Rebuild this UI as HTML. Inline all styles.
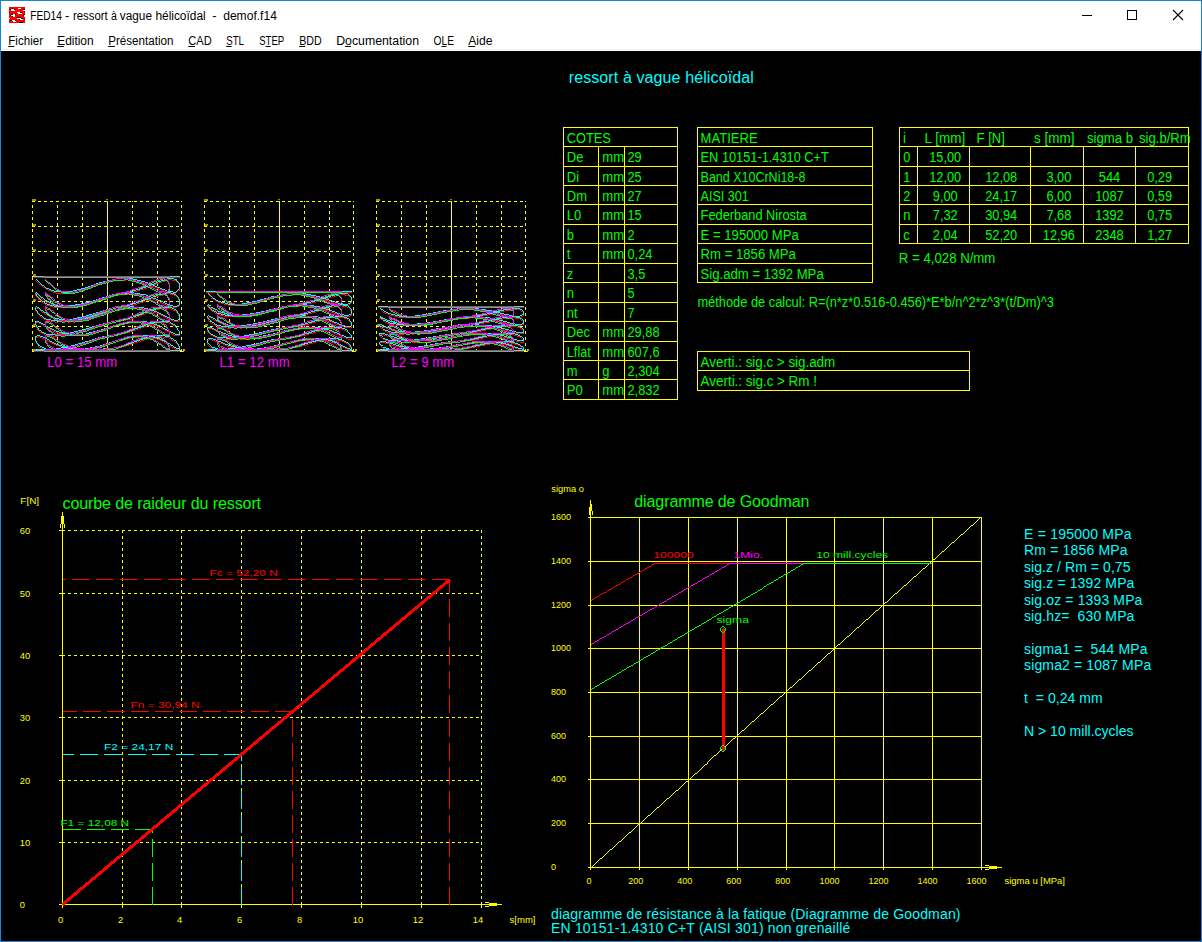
<!DOCTYPE html>
<html lang="fr"><head><meta charset="utf-8"><title>FED14 - ressort à vague hélicoïdal - demof.f14</title>
<style>html,body{margin:0;padding:0;background:#000;overflow:hidden}svg{display:block}text{white-space:pre}</style></head><body>
<svg width="1202" height="942" viewBox="0 0 1202 942" font-family="'Liberation Sans', 'DejaVu Sans', sans-serif">
<g id="frame">
<rect x="0" y="0" width="1202" height="942" fill="#1883d7"/>
<rect x="1" y="1" width="1200" height="50" fill="#ffffff"/>
<rect x="1" y="49" width="1200" height="1" fill="#f0f0f0"/>
<rect x="1" y="51" width="1200" height="890" fill="#000000"/>
<g id="appicon" shape-rendering="crispEdges">
<rect x="9" y="7" width="16" height="16" fill="#ff0000"/>
<rect x="12" y="8" width="1" height="1" fill="#000"/>
<rect x="18" y="8" width="3" height="1" fill="#fff"/>
<rect x="10" y="9" width="1" height="1" fill="#000"/>
<rect x="11" y="9" width="3" height="1" fill="#fff"/>
<rect x="14" y="9" width="1" height="1" fill="#000"/>
<rect x="23" y="9" width="2" height="1" fill="#000"/>
<rect x="11" y="10" width="4" height="1" fill="#fff"/>
<rect x="23" y="10" width="2" height="1" fill="#fff"/>
<rect x="24" y="11" width="1" height="1" fill="#000"/>
<rect x="9" y="12" width="1" height="1" fill="#000"/>
<rect x="17" y="12" width="3" height="1" fill="#fff"/>
<rect x="20" y="12" width="2" height="1" fill="#000"/>
<rect x="18" y="13" width="4" height="1" fill="#fff"/>
<rect x="11" y="14" width="2" height="1" fill="#000"/>
<rect x="13" y="14" width="2" height="1" fill="#fff"/>
<rect x="15" y="14" width="1" height="1" fill="#000"/>
<rect x="24" y="14" width="1" height="1" fill="#000"/>
<rect x="10" y="15" width="1" height="1" fill="#000"/>
<rect x="11" y="15" width="4" height="1" fill="#fff"/>
<rect x="23" y="15" width="1" height="1" fill="#000"/>
<rect x="24" y="15" width="1" height="1" fill="#fff"/>
<rect x="12" y="16" width="1" height="1" fill="#000"/>
<rect x="13" y="16" width="2" height="1" fill="#fff"/>
<rect x="24" y="16" width="1" height="1" fill="#fff"/>
<rect x="16" y="17" width="5" height="1" fill="#000"/>
<rect x="9" y="18" width="1" height="1" fill="#fff"/>
<rect x="17" y="18" width="4" height="1" fill="#fff"/>
<rect x="21" y="18" width="2" height="1" fill="#000"/>
<rect x="19" y="19" width="1" height="1" fill="#000"/>
<rect x="20" y="19" width="3" height="1" fill="#fff"/>
<rect x="10" y="20" width="2" height="1" fill="#000"/>
<rect x="12" y="20" width="3" height="1" fill="#fff"/>
<rect x="15" y="20" width="1" height="1" fill="#000"/>
<rect x="13" y="21" width="3" height="1" fill="#fff"/>
<rect x="19" y="22" width="4" height="1" fill="#000"/>
</g>
<g font-family="'Liberation Sans', 'DejaVu Sans', sans-serif" fill="#000000">
<text y="20" font-size="12" fill="#000"><tspan x="30.2" textLength="31.7" lengthAdjust="spacingAndGlyphs">FED14</tspan> <tspan x="65.0" textLength="4.3" lengthAdjust="spacingAndGlyphs">-</tspan> <tspan x="73.0" textLength="34.8" lengthAdjust="spacingAndGlyphs">ressort</tspan> <tspan x="111.1" textLength="5.9" lengthAdjust="spacingAndGlyphs">à</tspan> <tspan x="119.8" textLength="32.2" lengthAdjust="spacingAndGlyphs">vague</tspan> <tspan x="155.4" textLength="50.3" lengthAdjust="spacingAndGlyphs">hélicoïdal</tspan> <tspan x="212.2" textLength="4.3" lengthAdjust="spacingAndGlyphs">-</tspan> <tspan x="223.2" textLength="53.7" lengthAdjust="spacingAndGlyphs">demof.f14</tspan></text>
<text x="8.3" y="45" font-size="12" textLength="34.7" lengthAdjust="spacingAndGlyphs">Fichier</text>
<rect x="8.3" y="46" width="6.0" height="1" fill="#000"/>
<text x="57.2" y="45" font-size="12" textLength="36.4" lengthAdjust="spacingAndGlyphs">Edition</text>
<rect x="57.2" y="46" width="6.7" height="1" fill="#000"/>
<text x="108.2" y="45" font-size="12" textLength="65.3" lengthAdjust="spacingAndGlyphs">Présentation</text>
<rect x="108.2" y="46" width="6.6" height="1" fill="#000"/>
<text x="188.2" y="45" font-size="12" textLength="23.5" lengthAdjust="spacingAndGlyphs">CAD</text>
<rect x="188.2" y="46" width="6.8" height="1" fill="#000"/>
<text x="226.2" y="45" font-size="12" textLength="17.8" lengthAdjust="spacingAndGlyphs">STL</text>
<rect x="226.2" y="46" width="5.5" height="1" fill="#000"/>
<text x="259.2" y="45" font-size="12" textLength="25.0" lengthAdjust="spacingAndGlyphs">STEP</text>
<rect x="265.6" y="46" width="5.0" height="1" fill="#000"/>
<text x="299.2" y="45" font-size="12" textLength="22.5" lengthAdjust="spacingAndGlyphs">BDD</text>
<rect x="299.2" y="46" width="6.0" height="1" fill="#000"/>
<text x="336.2" y="45" font-size="12" textLength="82.8" lengthAdjust="spacingAndGlyphs">Documentation</text>
<rect x="345.1" y="46" width="5.8" height="1" fill="#000"/>
<text x="433.5" y="45" font-size="12" textLength="20.5" lengthAdjust="spacingAndGlyphs">OLE</text>
<rect x="441.5" y="46" width="4.8" height="1" fill="#000"/>
<text x="468.2" y="45" font-size="12" textLength="24.3" lengthAdjust="spacingAndGlyphs">Aide</text>
<rect x="468.2" y="46" width="6.9" height="1" fill="#000"/>
</g>
<g stroke="#000" stroke-width="1" fill="none" shape-rendering="crispEdges">
<line x1="1082" y1="15.5" x2="1092" y2="15.5"/>
<rect x="1127.5" y="10.5" width="9" height="9"/>
</g>
<g stroke="#000" stroke-width="1.1" fill="none">
<path d="M1173 10 L1183 20 M1183 10 L1173 20"/>
</g>
</g>
<text x="568.7" y="82.8" font-size="16" fill="#00ffff" letter-spacing="0.11">ressort à vague hélicoïdal</text>
<g class="spring" shape-rendering="crispEdges" fill="none" stroke-width="1">
<line x1="32" y1="201.5" x2="182" y2="201.5" stroke="#ffff00" stroke-width="1" stroke-dasharray="3 3" stroke-dashoffset="0"/>
<line x1="32" y1="226.5" x2="182" y2="226.5" stroke="#ffff00" stroke-width="1" stroke-dasharray="3 3" stroke-dashoffset="0"/>
<line x1="32" y1="251.5" x2="182" y2="251.5" stroke="#ffff00" stroke-width="1" stroke-dasharray="3 3" stroke-dashoffset="0"/>
<line x1="32" y1="276.5" x2="182" y2="276.5" stroke="#ffff00" stroke-width="1" stroke-dasharray="3 3" stroke-dashoffset="0"/>
<line x1="32" y1="301.5" x2="182" y2="301.5" stroke="#ffff00" stroke-width="1" stroke-dasharray="3 3" stroke-dashoffset="0"/>
<line x1="32" y1="326.5" x2="182" y2="326.5" stroke="#ffff00" stroke-width="1" stroke-dasharray="3 3" stroke-dashoffset="0"/>
<line x1="32" y1="351.5" x2="182" y2="351.5" stroke="#ffff00" stroke-width="1" stroke-dasharray="3 3" stroke-dashoffset="0"/>
<line x1="32.5" y1="352" x2="32.5" y2="201" stroke="#ffff00" stroke-width="1" stroke-dasharray="3 3" stroke-dashoffset="0"/>
<line x1="57.5" y1="352" x2="57.5" y2="201" stroke="#ffff00" stroke-width="1" stroke-dasharray="3 3" stroke-dashoffset="0"/>
<line x1="82.5" y1="352" x2="82.5" y2="201" stroke="#ffff00" stroke-width="1" stroke-dasharray="3 3" stroke-dashoffset="0"/>
<line x1="132.5" y1="352" x2="132.5" y2="201" stroke="#ffff00" stroke-width="1" stroke-dasharray="3 3" stroke-dashoffset="0"/>
<line x1="157.5" y1="352" x2="157.5" y2="201" stroke="#ffff00" stroke-width="1" stroke-dasharray="3 3" stroke-dashoffset="0"/>
<line x1="181.5" y1="352" x2="181.5" y2="201" stroke="#ffff00" stroke-width="1" stroke-dasharray="3 3" stroke-dashoffset="0"/>
<line x1="107.5" y1="201" x2="107.5" y2="352" stroke="#ffff00" stroke-width="1"/>
<rect x="32" y="199" width="1" height="2" fill="#55b800"/>
<rect x="33" y="199" width="1" height="2" fill="#c87800"/>
<rect x="34" y="199" width="1" height="2" fill="#6ab000"/>
<rect x="35" y="199" width="1" height="2" fill="#e08c00"/>
<rect x="33" y="224" width="1" height="2" fill="#c87800"/>
<rect x="34" y="224" width="1" height="2" fill="#55b800"/>
<rect x="35" y="224" width="1" height="2" fill="#d08000"/>
<rect x="33" y="249" width="1" height="2" fill="#c87800"/>
<rect x="34" y="249" width="1" height="2" fill="#55b800"/>
<rect x="35" y="249" width="1" height="2" fill="#d08000"/>
<rect x="33" y="274" width="1" height="2" fill="#c87800"/>
<rect x="34" y="274" width="1" height="2" fill="#55b800"/>
<rect x="35" y="274" width="1" height="2" fill="#d08000"/>
<rect x="33" y="299" width="1" height="2" fill="#c87800"/>
<rect x="34" y="299" width="1" height="2" fill="#55b800"/>
<rect x="35" y="299" width="1" height="2" fill="#d08000"/>
<rect x="33" y="324" width="1" height="2" fill="#c87800"/>
<rect x="34" y="324" width="1" height="2" fill="#55b800"/>
<rect x="35" y="324" width="1" height="2" fill="#d08000"/>
<rect x="33" y="349" width="1" height="2" fill="#c87800"/>
<rect x="34" y="349" width="1" height="2" fill="#55b800"/>
<rect x="35" y="349" width="1" height="2" fill="#d08000"/>
<rect x="106" y="199" width="2" height="1" fill="#8f8f00"/>
<rect x="180" y="350" width="1" height="2" fill="#ffff00"/>
<rect x="182" y="351" width="1" height="1" fill="#ffff00"/>
<rect x="183" y="349" width="1" height="3" fill="#b4d400"/>
<rect x="184" y="349" width="1" height="2" fill="#e89400"/>
<polyline points="35.5,280.0 39.1,283.8 46.1,289.2 56.2,293.1 68.9,293.3 83.6,289.6 99.4,284.2 115.6,280.2 131.4,279.9 146.1,283.4 158.8,288.8 168.9,292.9 175.9,293.4 179.5,290.0 179.5,284.7 175.9,280.4 168.9,279.7 158.8,283.0 146.1,288.3 131.4,292.7 115.6,295.3 99.4,300.5 83.6,304.7 68.9,307.3 56.2,307.8 46.1,305.0 39.1,299.7 35.5,295.0 35.5,293.8 39.1,296.6 46.1,301.9 56.2,306.5 68.9,307.9 83.6,305.2 99.4,300.0 115.6,295.3 131.4,293.8 146.1,296.3 158.8,301.4 168.9,306.2 175.9,307.9 179.5,305.6 179.5,300.5 175.9,295.6 168.9,293.7 158.8,295.9 146.1,301.0 131.4,305.9 115.6,308.0 99.4,313.3 83.6,317.9 68.9,321.0 56.2,322.2 46.1,320.4 39.1,315.5 35.5,310.3 35.5,308.0 39.1,309.7 46.1,314.5 56.2,319.6 68.9,322.1 83.6,320.6 99.4,315.8 115.6,310.7 131.4,308.0 146.1,309.4 158.8,314.0 168.9,319.3 175.9,322.1 179.5,320.8 179.5,316.3 175.9,311.0 168.9,308.1 158.8,309.1 146.1,313.6 131.4,318.9 115.6,322.0 99.4,326.0 83.6,330.9 68.9,334.5 56.2,336.2 46.1,335.5 39.1,331.3 35.5,325.9 35.5,322.5 39.1,323.0 46.1,327.1 56.2,332.5 68.9,336.0 83.6,335.7 99.4,331.6 115.6,326.2 131.4,322.6 146.1,322.8 158.8,326.7 168.9,332.1 175.9,335.9 179.5,335.8 179.5,332.1 175.9,326.7 168.9,322.8 158.8,322.6 146.1,326.3 131.4,331.7 115.6,335.7 99.4,338.7 83.6,343.8 68.9,347.8 56.2,350.2 46.1,350.3 39.1,347.0 35.5,341.6 35.5,337.3 39.1,336.6 46.1,339.9 56.2,345.2 68.9,349.6 83.6,350.4 99.4,347.3 115.6,342.0 131.4,337.5 146.1,336.5 158.8,339.5 168.9,344.8 175.9,349.3 179.5,350.5 179.5,347.7 175.9,342.4 168.9,337.8 158.8,336.4 146.1,339.1 131.4,344.3 115.6,349.0 99.4,350.6 83.6,350.6 68.9,350.6 56.2,350.6 46.1,350.6 39.1,350.6 35.5,350.6" stroke="#ff0000" stroke-width="0.8"/>
<polyline points="35.5,280.0 39.1,283.8 46.1,289.2 56.2,293.1 68.9,293.3 83.6,289.6 99.4,284.2 115.6,280.2 131.4,279.9 146.1,283.4 158.8,288.8 168.9,292.9 175.9,293.4 179.5,290.0 179.5,284.7 175.9,280.4 168.9,279.7 158.8,283.0 146.1,288.3 131.4,292.7 115.6,295.3 99.4,300.5 83.6,304.7 68.9,307.3 56.2,307.8 46.1,305.0 39.1,299.7 35.5,295.0 35.5,293.8 39.1,296.6 46.1,301.9 56.2,306.5 68.9,307.9 83.6,305.2 99.4,300.0 115.6,295.3 131.4,293.8 146.1,296.3 158.8,301.4 168.9,306.2 175.9,307.9 179.5,305.6 179.5,300.5 175.9,295.6 168.9,293.7 158.8,295.9 146.1,301.0 131.4,305.9 115.6,308.0 99.4,313.3 83.6,317.9 68.9,321.0 56.2,322.2 46.1,320.4 39.1,315.5 35.5,310.3 35.5,308.0 39.1,309.7 46.1,314.5 56.2,319.6 68.9,322.1 83.6,320.6 99.4,315.8 115.6,310.7 131.4,308.0 146.1,309.4 158.8,314.0 168.9,319.3 175.9,322.1 179.5,320.8 179.5,316.3 175.9,311.0 168.9,308.1 158.8,309.1 146.1,313.6 131.4,318.9 115.6,322.0 99.4,326.0 83.6,330.9 68.9,334.5 56.2,336.2 46.1,335.5 39.1,331.3 35.5,325.9 35.5,322.5 39.1,323.0 46.1,327.1 56.2,332.5 68.9,336.0 83.6,335.7 99.4,331.6 115.6,326.2 131.4,322.6 146.1,322.8 158.8,326.7 168.9,332.1 175.9,335.9 179.5,335.8 179.5,332.1 175.9,326.7 168.9,322.8 158.8,322.6 146.1,326.3 131.4,331.7 115.6,335.7 99.4,338.7 83.6,343.8 68.9,347.8 56.2,350.2 46.1,350.3 39.1,347.0 35.5,341.6 35.5,337.3 39.1,336.6 46.1,339.9 56.2,345.2 68.9,349.6 83.6,350.4 99.4,347.3 115.6,342.0 131.4,337.5 146.1,336.5 158.8,339.5 168.9,344.8 175.9,349.3 179.5,350.5 179.5,347.7 175.9,342.4 168.9,337.8 158.8,336.4 146.1,339.1 131.4,344.3 115.6,349.0 99.4,350.6 83.6,350.6 68.9,350.6 56.2,350.6 46.1,350.6 39.1,350.6 35.5,350.6" stroke="#ff0000" stroke-width="0.8"/>
<polyline points="35.5,280.0 39.1,283.8 46.1,289.2 56.2,293.1 68.9,293.3 83.6,289.6 99.4,284.2 115.6,280.2 131.4,279.9 146.1,283.4 158.8,288.8 168.9,292.9 175.9,293.4 179.5,290.0 179.5,284.7 175.9,280.4 168.9,279.7 158.8,283.0 146.1,288.3 131.4,292.7 115.6,295.3 99.4,300.5 83.6,304.7 68.9,307.3 56.2,307.8 46.1,305.0 39.1,299.7 35.5,295.0 35.5,293.8 39.1,296.6 46.1,301.9 56.2,306.5 68.9,307.9 83.6,305.2 99.4,300.0 115.6,295.3 131.4,293.8 146.1,296.3 158.8,301.4 168.9,306.2 175.9,307.9 179.5,305.6 179.5,300.5 175.9,295.6 168.9,293.7 158.8,295.9 146.1,301.0 131.4,305.9 115.6,308.0 99.4,313.3 83.6,317.9 68.9,321.0 56.2,322.2 46.1,320.4 39.1,315.5 35.5,310.3 35.5,308.0 39.1,309.7 46.1,314.5 56.2,319.6 68.9,322.1 83.6,320.6 99.4,315.8 115.6,310.7 131.4,308.0 146.1,309.4 158.8,314.0 168.9,319.3 175.9,322.1 179.5,320.8 179.5,316.3 175.9,311.0 168.9,308.1 158.8,309.1 146.1,313.6 131.4,318.9 115.6,322.0 99.4,326.0 83.6,330.9 68.9,334.5 56.2,336.2 46.1,335.5 39.1,331.3 35.5,325.9 35.5,322.5 39.1,323.0 46.1,327.1 56.2,332.5 68.9,336.0 83.6,335.7 99.4,331.6 115.6,326.2 131.4,322.6 146.1,322.8 158.8,326.7 168.9,332.1 175.9,335.9 179.5,335.8 179.5,332.1 175.9,326.7 168.9,322.8 158.8,322.6 146.1,326.3 131.4,331.7 115.6,335.7 99.4,338.7 83.6,343.8 68.9,347.8 56.2,350.2 46.1,350.3 39.1,347.0 35.5,341.6 35.5,337.3 39.1,336.6 46.1,339.9 56.2,345.2 68.9,349.6 83.6,350.4 99.4,347.3 115.6,342.0 131.4,337.5 146.1,336.5 158.8,339.5 168.9,344.8 175.9,349.3 179.5,350.5 179.5,347.7 175.9,342.4 168.9,337.8 158.8,336.4 146.1,339.1 131.4,344.3 115.6,349.0 99.4,350.6 83.6,350.6 68.9,350.6 56.2,350.6 46.1,350.6 39.1,350.6 35.5,350.6" stroke="#ff0000" stroke-width="0.8"/>
<polyline points="45.4,280.0 48.5,283.8 54.6,289.2 63.3,293.1 74.2,293.3 86.9,289.6 100.5,284.2 114.5,280.2 128.1,279.9 140.8,283.4 151.7,288.8 160.4,292.9 166.5,293.4 169.6,290.0 169.6,284.7 166.5,280.4 160.4,279.7 151.7,283.0 140.8,288.3 128.1,292.7 114.5,295.3 100.5,300.5 86.9,304.7 74.2,307.3 63.3,307.8 54.6,305.0 48.5,299.7 45.4,295.0 45.4,293.8 48.5,296.6 54.6,301.9 63.3,306.5 74.2,307.9 86.9,305.2 100.5,300.0 114.5,295.3 128.1,293.8 140.8,296.3 151.7,301.4 160.4,306.2 166.5,307.9 169.6,305.6 169.6,300.5 166.5,295.6 160.4,293.7 151.7,295.9 140.8,301.0 128.1,305.9 114.5,308.0 100.5,313.3 86.9,317.9 74.2,321.0 63.3,322.2 54.6,320.4 48.5,315.5 45.4,310.3 45.4,308.0 48.5,309.7 54.6,314.5 63.3,319.6 74.2,322.1 86.9,320.6 100.5,315.8 114.5,310.7 128.1,308.0 140.8,309.4 151.7,314.0 160.4,319.3 166.5,322.1 169.6,320.8 169.6,316.3 166.5,311.0 160.4,308.1 151.7,309.1 140.8,313.6 128.1,318.9 114.5,322.0 100.5,326.0 86.9,330.9 74.2,334.5 63.3,336.2 54.6,335.5 48.5,331.3 45.4,325.9 45.4,322.5 48.5,323.0 54.6,327.1 63.3,332.5 74.2,336.0 86.9,335.7 100.5,331.6 114.5,326.2 128.1,322.6 140.8,322.8 151.7,326.7 160.4,332.1 166.5,335.9 169.6,335.8 169.6,332.1 166.5,326.7 160.4,322.8 151.7,322.6 140.8,326.3 128.1,331.7 114.5,335.7 100.5,338.7 86.9,343.8 74.2,347.8 63.3,350.2 54.6,350.3 48.5,347.0 45.4,341.6 45.4,337.3 48.5,336.6 54.6,339.9 63.3,345.2 74.2,349.6 86.9,350.4 100.5,347.3 114.5,342.0 128.1,337.5 140.8,336.5 151.7,339.5 160.4,344.8 166.5,349.3 169.6,350.5 169.6,347.7 166.5,342.4 160.4,337.8 151.7,336.4 140.8,339.1 128.1,344.3 114.5,349.0 100.5,350.6 86.9,350.6 74.2,350.6 63.3,350.6 54.6,350.6 48.5,350.6 45.4,350.6" stroke="#00ff00" stroke-width="0.8"/>
<polyline points="45.4,280.0 48.5,283.8 54.6,289.2 63.3,293.1 74.2,293.3 86.9,289.6 100.5,284.2 114.5,280.2 128.1,279.9 140.8,283.4 151.7,288.8 160.4,292.9 166.5,293.4 169.6,290.0 169.6,284.7 166.5,280.4 160.4,279.7 151.7,283.0 140.8,288.3 128.1,292.7 114.5,295.3 100.5,300.5 86.9,304.7 74.2,307.3 63.3,307.8 54.6,305.0 48.5,299.7 45.4,295.0 45.4,293.8 48.5,296.6 54.6,301.9 63.3,306.5 74.2,307.9 86.9,305.2 100.5,300.0 114.5,295.3 128.1,293.8 140.8,296.3 151.7,301.4 160.4,306.2 166.5,307.9 169.6,305.6 169.6,300.5 166.5,295.6 160.4,293.7 151.7,295.9 140.8,301.0 128.1,305.9 114.5,308.0 100.5,313.3 86.9,317.9 74.2,321.0 63.3,322.2 54.6,320.4 48.5,315.5 45.4,310.3 45.4,308.0 48.5,309.7 54.6,314.5 63.3,319.6 74.2,322.1 86.9,320.6 100.5,315.8 114.5,310.7 128.1,308.0 140.8,309.4 151.7,314.0 160.4,319.3 166.5,322.1 169.6,320.8 169.6,316.3 166.5,311.0 160.4,308.1 151.7,309.1 140.8,313.6 128.1,318.9 114.5,322.0 100.5,326.0 86.9,330.9 74.2,334.5 63.3,336.2 54.6,335.5 48.5,331.3 45.4,325.9 45.4,322.5 48.5,323.0 54.6,327.1 63.3,332.5 74.2,336.0 86.9,335.7 100.5,331.6 114.5,326.2 128.1,322.6 140.8,322.8 151.7,326.7 160.4,332.1 166.5,335.9 169.6,335.8 169.6,332.1 166.5,326.7 160.4,322.8 151.7,322.6 140.8,326.3 128.1,331.7 114.5,335.7 100.5,338.7 86.9,343.8 74.2,347.8 63.3,350.2 54.6,350.3 48.5,347.0 45.4,341.6 45.4,337.3 48.5,336.6 54.6,339.9 63.3,345.2 74.2,349.6 86.9,350.4 100.5,347.3 114.5,342.0 128.1,337.5 140.8,336.5 151.7,339.5 160.4,344.8 166.5,349.3 169.6,350.5 169.6,347.7 166.5,342.4 160.4,337.8 151.7,336.4 140.8,339.1 128.1,344.3 114.5,349.0 100.5,350.6 86.9,350.6 74.2,350.6 63.3,350.6 54.6,350.6 48.5,350.6 45.4,350.6" stroke="#00ff00" stroke-width="0.8"/>
<polyline points="45.4,280.0 48.5,283.8 54.6,289.2 63.3,293.1 74.2,293.3 86.9,289.6 100.5,284.2 114.5,280.2 128.1,279.9 140.8,283.4 151.7,288.8 160.4,292.9 166.5,293.4 169.6,290.0 169.6,284.7 166.5,280.4 160.4,279.7 151.7,283.0 140.8,288.3 128.1,292.7 114.5,295.3 100.5,300.5 86.9,304.7 74.2,307.3 63.3,307.8 54.6,305.0 48.5,299.7 45.4,295.0 45.4,293.8 48.5,296.6 54.6,301.9 63.3,306.5 74.2,307.9 86.9,305.2 100.5,300.0 114.5,295.3 128.1,293.8 140.8,296.3 151.7,301.4 160.4,306.2 166.5,307.9 169.6,305.6 169.6,300.5 166.5,295.6 160.4,293.7 151.7,295.9 140.8,301.0 128.1,305.9 114.5,308.0 100.5,313.3 86.9,317.9 74.2,321.0 63.3,322.2 54.6,320.4 48.5,315.5 45.4,310.3 45.4,308.0 48.5,309.7 54.6,314.5 63.3,319.6 74.2,322.1 86.9,320.6 100.5,315.8 114.5,310.7 128.1,308.0 140.8,309.4 151.7,314.0 160.4,319.3 166.5,322.1 169.6,320.8 169.6,316.3 166.5,311.0 160.4,308.1 151.7,309.1 140.8,313.6 128.1,318.9 114.5,322.0 100.5,326.0 86.9,330.9 74.2,334.5 63.3,336.2 54.6,335.5 48.5,331.3 45.4,325.9 45.4,322.5 48.5,323.0 54.6,327.1 63.3,332.5 74.2,336.0 86.9,335.7 100.5,331.6 114.5,326.2 128.1,322.6 140.8,322.8 151.7,326.7 160.4,332.1 166.5,335.9 169.6,335.8 169.6,332.1 166.5,326.7 160.4,322.8 151.7,322.6 140.8,326.3 128.1,331.7 114.5,335.7 100.5,338.7 86.9,343.8 74.2,347.8 63.3,350.2 54.6,350.3 48.5,347.0 45.4,341.6 45.4,337.3 48.5,336.6 54.6,339.9 63.3,345.2 74.2,349.6 86.9,350.4 100.5,347.3 114.5,342.0 128.1,337.5 140.8,336.5 151.7,339.5 160.4,344.8 166.5,349.3 169.6,350.5 169.6,347.7 166.5,342.4 160.4,337.8 151.7,336.4 140.8,339.1 128.1,344.3 114.5,349.0 100.5,350.6 86.9,350.6 74.2,350.6 63.3,350.6 54.6,350.6 48.5,350.6 45.4,350.6" stroke="#00ff00" stroke-width="0.8"/>
<polyline points="35.5,278.8 39.1,282.6 46.1,288.0 56.2,291.9 68.9,292.1 83.6,288.4 99.4,283.0 115.6,279.0 131.4,278.7 146.1,282.2 158.8,287.6 168.9,291.7 175.9,292.2 179.5,288.8 179.5,283.5 175.9,279.2 168.9,278.5 158.8,281.8 146.1,287.1 131.4,291.5 115.6,294.1 99.4,299.3 83.6,303.5 68.9,306.1 56.2,306.6 46.1,303.8 39.1,298.5 35.5,293.8 35.5,292.6 39.1,295.4 46.1,300.7 56.2,305.3 68.9,306.7 83.6,304.0 99.4,298.8 115.6,294.1 131.4,292.6 146.1,295.1 158.8,300.2 168.9,305.0 175.9,306.7 179.5,304.4 179.5,299.3 175.9,294.4 168.9,292.5 158.8,294.7 146.1,299.8 131.4,304.7 115.6,306.8 99.4,312.1 83.6,316.7 68.9,319.8 56.2,321.0 46.1,319.2 39.1,314.3 35.5,309.1 35.5,306.8 39.1,308.5 46.1,313.3 56.2,318.4 68.9,320.9 83.6,319.4 99.4,314.6 115.6,309.5 131.4,306.8 146.1,308.2 158.8,312.8 168.9,318.1 175.9,320.9 179.5,319.6 179.5,315.1 175.9,309.8 168.9,306.9 158.8,307.9 146.1,312.4 131.4,317.7 115.6,320.8 99.4,324.8 83.6,329.7 68.9,333.3 56.2,335.0 46.1,334.3 39.1,330.1 35.5,324.7 35.5,321.3 39.1,321.8 46.1,325.9 56.2,331.3 68.9,334.8 83.6,334.5 99.4,330.4 115.6,325.0 131.4,321.4 146.1,321.6 158.8,325.5 168.9,330.9 175.9,334.7 179.5,334.6 179.5,330.9 175.9,325.5 168.9,321.6 158.8,321.4 146.1,325.1 131.4,330.5 115.6,334.5 99.4,337.5 83.6,342.6 68.9,346.6 56.2,349.0 46.1,349.1 39.1,345.8 35.5,340.4 35.5,336.1 39.1,335.4 46.1,338.7 56.2,344.0 68.9,348.4 83.6,349.2 99.4,346.1 115.6,340.8 131.4,336.3 146.1,335.3 158.8,338.3 168.9,343.6 175.9,348.1 179.5,349.3 179.5,346.5 175.9,341.2 168.9,336.6 158.8,335.2 146.1,337.9 131.4,343.1 115.6,347.8 99.4,349.4 83.6,349.4 68.9,349.4 56.2,349.4 46.1,349.4 39.1,349.4 35.5,349.4" stroke="#00ffff" stroke-width="0.8"/>
<polyline points="35.5,278.8 39.1,282.6 46.1,288.0 56.2,291.9 68.9,292.1 83.6,288.4 99.4,283.0 115.6,279.0 131.4,278.7 146.1,282.2 158.8,287.6 168.9,291.7 175.9,292.2 179.5,288.8 179.5,283.5 175.9,279.2 168.9,278.5 158.8,281.8 146.1,287.1 131.4,291.5 115.6,294.1 99.4,299.3 83.6,303.5 68.9,306.1 56.2,306.6 46.1,303.8 39.1,298.5 35.5,293.8 35.5,292.6 39.1,295.4 46.1,300.7 56.2,305.3 68.9,306.7 83.6,304.0 99.4,298.8 115.6,294.1 131.4,292.6 146.1,295.1 158.8,300.2 168.9,305.0 175.9,306.7 179.5,304.4 179.5,299.3 175.9,294.4 168.9,292.5 158.8,294.7 146.1,299.8 131.4,304.7 115.6,306.8 99.4,312.1 83.6,316.7 68.9,319.8 56.2,321.0 46.1,319.2 39.1,314.3 35.5,309.1 35.5,306.8 39.1,308.5 46.1,313.3 56.2,318.4 68.9,320.9 83.6,319.4 99.4,314.6 115.6,309.5 131.4,306.8 146.1,308.2 158.8,312.8 168.9,318.1 175.9,320.9 179.5,319.6 179.5,315.1 175.9,309.8 168.9,306.9 158.8,307.9 146.1,312.4 131.4,317.7 115.6,320.8 99.4,324.8 83.6,329.7 68.9,333.3 56.2,335.0 46.1,334.3 39.1,330.1 35.5,324.7 35.5,321.3 39.1,321.8 46.1,325.9 56.2,331.3 68.9,334.8 83.6,334.5 99.4,330.4 115.6,325.0 131.4,321.4 146.1,321.6 158.8,325.5 168.9,330.9 175.9,334.7 179.5,334.6 179.5,330.9 175.9,325.5 168.9,321.6 158.8,321.4 146.1,325.1 131.4,330.5 115.6,334.5 99.4,337.5 83.6,342.6 68.9,346.6 56.2,349.0 46.1,349.1 39.1,345.8 35.5,340.4 35.5,336.1 39.1,335.4 46.1,338.7 56.2,344.0 68.9,348.4 83.6,349.2 99.4,346.1 115.6,340.8 131.4,336.3 146.1,335.3 158.8,338.3 168.9,343.6 175.9,348.1 179.5,349.3 179.5,346.5 175.9,341.2 168.9,336.6 158.8,335.2 146.1,337.9 131.4,343.1 115.6,347.8 99.4,349.4 83.6,349.4 68.9,349.4 56.2,349.4 46.1,349.4 39.1,349.4 35.5,349.4" stroke="#00ffff" stroke-width="0.8"/>
<polyline points="35.5,278.8 39.1,282.6 46.1,288.0 56.2,291.9 68.9,292.1 83.6,288.4 99.4,283.0 115.6,279.0 131.4,278.7 146.1,282.2 158.8,287.6 168.9,291.7 175.9,292.2 179.5,288.8 179.5,283.5 175.9,279.2 168.9,278.5 158.8,281.8 146.1,287.1 131.4,291.5 115.6,294.1 99.4,299.3 83.6,303.5 68.9,306.1 56.2,306.6 46.1,303.8 39.1,298.5 35.5,293.8 35.5,292.6 39.1,295.4 46.1,300.7 56.2,305.3 68.9,306.7 83.6,304.0 99.4,298.8 115.6,294.1 131.4,292.6 146.1,295.1 158.8,300.2 168.9,305.0 175.9,306.7 179.5,304.4 179.5,299.3 175.9,294.4 168.9,292.5 158.8,294.7 146.1,299.8 131.4,304.7 115.6,306.8 99.4,312.1 83.6,316.7 68.9,319.8 56.2,321.0 46.1,319.2 39.1,314.3 35.5,309.1 35.5,306.8 39.1,308.5 46.1,313.3 56.2,318.4 68.9,320.9 83.6,319.4 99.4,314.6 115.6,309.5 131.4,306.8 146.1,308.2 158.8,312.8 168.9,318.1 175.9,320.9 179.5,319.6 179.5,315.1 175.9,309.8 168.9,306.9 158.8,307.9 146.1,312.4 131.4,317.7 115.6,320.8 99.4,324.8 83.6,329.7 68.9,333.3 56.2,335.0 46.1,334.3 39.1,330.1 35.5,324.7 35.5,321.3 39.1,321.8 46.1,325.9 56.2,331.3 68.9,334.8 83.6,334.5 99.4,330.4 115.6,325.0 131.4,321.4 146.1,321.6 158.8,325.5 168.9,330.9 175.9,334.7 179.5,334.6 179.5,330.9 175.9,325.5 168.9,321.6 158.8,321.4 146.1,325.1 131.4,330.5 115.6,334.5 99.4,337.5 83.6,342.6 68.9,346.6 56.2,349.0 46.1,349.1 39.1,345.8 35.5,340.4 35.5,336.1 39.1,335.4 46.1,338.7 56.2,344.0 68.9,348.4 83.6,349.2 99.4,346.1 115.6,340.8 131.4,336.3 146.1,335.3 158.8,338.3 168.9,343.6 175.9,348.1 179.5,349.3 179.5,346.5 175.9,341.2 168.9,336.6 158.8,335.2 146.1,337.9 131.4,343.1 115.6,347.8 99.4,349.4 83.6,349.4 68.9,349.4 56.2,349.4 46.1,349.4 39.1,349.4 35.5,349.4" stroke="#00ffff" stroke-width="0.8"/>
<polyline points="45.4,278.8 48.5,282.6 54.6,288.0 63.3,291.9 74.2,292.1 86.9,288.4 100.5,283.0 114.5,279.0 128.1,278.7 140.8,282.2 151.7,287.6 160.4,291.7 166.5,292.2 169.6,288.8 169.6,283.5 166.5,279.2 160.4,278.5 151.7,281.8 140.8,287.1 128.1,291.5 114.5,294.1 100.5,299.3 86.9,303.5 74.2,306.1 63.3,306.6 54.6,303.8 48.5,298.5 45.4,293.8 45.4,292.6 48.5,295.4 54.6,300.7 63.3,305.3 74.2,306.7 86.9,304.0 100.5,298.8 114.5,294.1 128.1,292.6 140.8,295.1 151.7,300.2 160.4,305.0 166.5,306.7 169.6,304.4 169.6,299.3 166.5,294.4 160.4,292.5 151.7,294.7 140.8,299.8 128.1,304.7 114.5,306.8 100.5,312.1 86.9,316.7 74.2,319.8 63.3,321.0 54.6,319.2 48.5,314.3 45.4,309.1 45.4,306.8 48.5,308.5 54.6,313.3 63.3,318.4 74.2,320.9 86.9,319.4 100.5,314.6 114.5,309.5 128.1,306.8 140.8,308.2 151.7,312.8 160.4,318.1 166.5,320.9 169.6,319.6 169.6,315.1 166.5,309.8 160.4,306.9 151.7,307.9 140.8,312.4 128.1,317.7 114.5,320.8 100.5,324.8 86.9,329.7 74.2,333.3 63.3,335.0 54.6,334.3 48.5,330.1 45.4,324.7 45.4,321.3 48.5,321.8 54.6,325.9 63.3,331.3 74.2,334.8 86.9,334.5 100.5,330.4 114.5,325.0 128.1,321.4 140.8,321.6 151.7,325.5 160.4,330.9 166.5,334.7 169.6,334.6 169.6,330.9 166.5,325.5 160.4,321.6 151.7,321.4 140.8,325.1 128.1,330.5 114.5,334.5 100.5,337.5 86.9,342.6 74.2,346.6 63.3,349.0 54.6,349.1 48.5,345.8 45.4,340.4 45.4,336.1 48.5,335.4 54.6,338.7 63.3,344.0 74.2,348.4 86.9,349.2 100.5,346.1 114.5,340.8 128.1,336.3 140.8,335.3 151.7,338.3 160.4,343.6 166.5,348.1 169.6,349.3 169.6,346.5 166.5,341.2 160.4,336.6 151.7,335.2 140.8,337.9 128.1,343.1 114.5,347.8 100.5,349.4 86.9,349.4 74.2,349.4 63.3,349.4 54.6,349.4 48.5,349.4 45.4,349.4" stroke="#ff00ff" stroke-width="0.8"/>
<polyline points="45.4,278.8 48.5,282.6 54.6,288.0 63.3,291.9 74.2,292.1 86.9,288.4 100.5,283.0 114.5,279.0 128.1,278.7 140.8,282.2 151.7,287.6 160.4,291.7 166.5,292.2 169.6,288.8 169.6,283.5 166.5,279.2 160.4,278.5 151.7,281.8 140.8,287.1 128.1,291.5 114.5,294.1 100.5,299.3 86.9,303.5 74.2,306.1 63.3,306.6 54.6,303.8 48.5,298.5 45.4,293.8 45.4,292.6 48.5,295.4 54.6,300.7 63.3,305.3 74.2,306.7 86.9,304.0 100.5,298.8 114.5,294.1 128.1,292.6 140.8,295.1 151.7,300.2 160.4,305.0 166.5,306.7 169.6,304.4 169.6,299.3 166.5,294.4 160.4,292.5 151.7,294.7 140.8,299.8 128.1,304.7 114.5,306.8 100.5,312.1 86.9,316.7 74.2,319.8 63.3,321.0 54.6,319.2 48.5,314.3 45.4,309.1 45.4,306.8 48.5,308.5 54.6,313.3 63.3,318.4 74.2,320.9 86.9,319.4 100.5,314.6 114.5,309.5 128.1,306.8 140.8,308.2 151.7,312.8 160.4,318.1 166.5,320.9 169.6,319.6 169.6,315.1 166.5,309.8 160.4,306.9 151.7,307.9 140.8,312.4 128.1,317.7 114.5,320.8 100.5,324.8 86.9,329.7 74.2,333.3 63.3,335.0 54.6,334.3 48.5,330.1 45.4,324.7 45.4,321.3 48.5,321.8 54.6,325.9 63.3,331.3 74.2,334.8 86.9,334.5 100.5,330.4 114.5,325.0 128.1,321.4 140.8,321.6 151.7,325.5 160.4,330.9 166.5,334.7 169.6,334.6 169.6,330.9 166.5,325.5 160.4,321.6 151.7,321.4 140.8,325.1 128.1,330.5 114.5,334.5 100.5,337.5 86.9,342.6 74.2,346.6 63.3,349.0 54.6,349.1 48.5,345.8 45.4,340.4 45.4,336.1 48.5,335.4 54.6,338.7 63.3,344.0 74.2,348.4 86.9,349.2 100.5,346.1 114.5,340.8 128.1,336.3 140.8,335.3 151.7,338.3 160.4,343.6 166.5,348.1 169.6,349.3 169.6,346.5 166.5,341.2 160.4,336.6 151.7,335.2 140.8,337.9 128.1,343.1 114.5,347.8 100.5,349.4 86.9,349.4 74.2,349.4 63.3,349.4 54.6,349.4 48.5,349.4 45.4,349.4" stroke="#ff00ff" stroke-width="0.8"/>
<polyline points="45.4,278.8 48.5,282.6 54.6,288.0 63.3,291.9 74.2,292.1 86.9,288.4 100.5,283.0 114.5,279.0 128.1,278.7 140.8,282.2 151.7,287.6 160.4,291.7 166.5,292.2 169.6,288.8 169.6,283.5 166.5,279.2 160.4,278.5 151.7,281.8 140.8,287.1 128.1,291.5 114.5,294.1 100.5,299.3 86.9,303.5 74.2,306.1 63.3,306.6 54.6,303.8 48.5,298.5 45.4,293.8 45.4,292.6 48.5,295.4 54.6,300.7 63.3,305.3 74.2,306.7 86.9,304.0 100.5,298.8 114.5,294.1 128.1,292.6 140.8,295.1 151.7,300.2 160.4,305.0 166.5,306.7 169.6,304.4 169.6,299.3 166.5,294.4 160.4,292.5 151.7,294.7 140.8,299.8 128.1,304.7 114.5,306.8 100.5,312.1 86.9,316.7 74.2,319.8 63.3,321.0 54.6,319.2 48.5,314.3 45.4,309.1 45.4,306.8 48.5,308.5 54.6,313.3 63.3,318.4 74.2,320.9 86.9,319.4 100.5,314.6 114.5,309.5 128.1,306.8 140.8,308.2 151.7,312.8 160.4,318.1 166.5,320.9 169.6,319.6 169.6,315.1 166.5,309.8 160.4,306.9 151.7,307.9 140.8,312.4 128.1,317.7 114.5,320.8 100.5,324.8 86.9,329.7 74.2,333.3 63.3,335.0 54.6,334.3 48.5,330.1 45.4,324.7 45.4,321.3 48.5,321.8 54.6,325.9 63.3,331.3 74.2,334.8 86.9,334.5 100.5,330.4 114.5,325.0 128.1,321.4 140.8,321.6 151.7,325.5 160.4,330.9 166.5,334.7 169.6,334.6 169.6,330.9 166.5,325.5 160.4,321.6 151.7,321.4 140.8,325.1 128.1,330.5 114.5,334.5 100.5,337.5 86.9,342.6 74.2,346.6 63.3,349.0 54.6,349.1 48.5,345.8 45.4,340.4 45.4,336.1 48.5,335.4 54.6,338.7 63.3,344.0 74.2,348.4 86.9,349.2 100.5,346.1 114.5,340.8 128.1,336.3 140.8,335.3 151.7,338.3 160.4,343.6 166.5,348.1 169.6,349.3 169.6,346.5 166.5,341.2 160.4,336.6 151.7,335.2 140.8,337.9 128.1,343.1 114.5,347.8 100.5,349.4 86.9,349.4 74.2,349.4 63.3,349.4 54.6,349.4 48.5,349.4 45.4,349.4" stroke="#ff00ff" stroke-width="0.8"/>
<line x1="34" y1="277.5" x2="180" y2="277.5" stroke="#ff0000" stroke-width="1"/>
<line x1="44" y1="277.5" x2="170" y2="277.5" stroke="#00ff00" stroke-width="1"/>
<line x1="34" y1="276.5" x2="180" y2="276.5" stroke="#00ffff" stroke-width="1"/>
<line x1="44" y1="276.5" x2="170" y2="276.5" stroke="#ff00ff" stroke-width="1"/>
<line x1="34" y1="350.5" x2="180" y2="350.5" stroke="#00ffff" stroke-width="1"/>
<line x1="44" y1="350.5" x2="170" y2="350.5" stroke="#ff00ff" stroke-width="1"/>
<line x1="34" y1="351.5" x2="180" y2="351.5" stroke="#ff0000" stroke-width="1"/>
<line x1="44" y1="351.5" x2="170" y2="351.5" stroke="#00ff00" stroke-width="1"/>
</g>
<text x="47.2" y="367" font-size="14" fill="#ff00ff" textLength="70.2" lengthAdjust="spacingAndGlyphs">L0 = 15 mm</text>
<g class="spring" shape-rendering="crispEdges" fill="none" stroke-width="1">
<line x1="204" y1="201.5" x2="354" y2="201.5" stroke="#ffff00" stroke-width="1" stroke-dasharray="3 3" stroke-dashoffset="0"/>
<line x1="204" y1="226.5" x2="354" y2="226.5" stroke="#ffff00" stroke-width="1" stroke-dasharray="3 3" stroke-dashoffset="0"/>
<line x1="204" y1="251.5" x2="354" y2="251.5" stroke="#ffff00" stroke-width="1" stroke-dasharray="3 3" stroke-dashoffset="0"/>
<line x1="204" y1="276.5" x2="354" y2="276.5" stroke="#ffff00" stroke-width="1" stroke-dasharray="3 3" stroke-dashoffset="0"/>
<line x1="204" y1="301.5" x2="354" y2="301.5" stroke="#ffff00" stroke-width="1" stroke-dasharray="3 3" stroke-dashoffset="0"/>
<line x1="204" y1="326.5" x2="354" y2="326.5" stroke="#ffff00" stroke-width="1" stroke-dasharray="3 3" stroke-dashoffset="0"/>
<line x1="204" y1="351.5" x2="354" y2="351.5" stroke="#ffff00" stroke-width="1" stroke-dasharray="3 3" stroke-dashoffset="0"/>
<line x1="204.5" y1="352" x2="204.5" y2="201" stroke="#ffff00" stroke-width="1" stroke-dasharray="3 3" stroke-dashoffset="0"/>
<line x1="229.5" y1="352" x2="229.5" y2="201" stroke="#ffff00" stroke-width="1" stroke-dasharray="3 3" stroke-dashoffset="0"/>
<line x1="254.5" y1="352" x2="254.5" y2="201" stroke="#ffff00" stroke-width="1" stroke-dasharray="3 3" stroke-dashoffset="0"/>
<line x1="304.5" y1="352" x2="304.5" y2="201" stroke="#ffff00" stroke-width="1" stroke-dasharray="3 3" stroke-dashoffset="0"/>
<line x1="329.5" y1="352" x2="329.5" y2="201" stroke="#ffff00" stroke-width="1" stroke-dasharray="3 3" stroke-dashoffset="0"/>
<line x1="353.5" y1="352" x2="353.5" y2="201" stroke="#ffff00" stroke-width="1" stroke-dasharray="3 3" stroke-dashoffset="0"/>
<line x1="279.5" y1="201" x2="279.5" y2="352" stroke="#ffff00" stroke-width="1"/>
<rect x="204" y="199" width="1" height="2" fill="#55b800"/>
<rect x="205" y="199" width="1" height="2" fill="#c87800"/>
<rect x="206" y="199" width="1" height="2" fill="#6ab000"/>
<rect x="207" y="199" width="1" height="2" fill="#e08c00"/>
<rect x="205" y="224" width="1" height="2" fill="#c87800"/>
<rect x="206" y="224" width="1" height="2" fill="#55b800"/>
<rect x="207" y="224" width="1" height="2" fill="#d08000"/>
<rect x="205" y="249" width="1" height="2" fill="#c87800"/>
<rect x="206" y="249" width="1" height="2" fill="#55b800"/>
<rect x="207" y="249" width="1" height="2" fill="#d08000"/>
<rect x="205" y="274" width="1" height="2" fill="#c87800"/>
<rect x="206" y="274" width="1" height="2" fill="#55b800"/>
<rect x="207" y="274" width="1" height="2" fill="#d08000"/>
<rect x="205" y="299" width="1" height="2" fill="#c87800"/>
<rect x="206" y="299" width="1" height="2" fill="#55b800"/>
<rect x="207" y="299" width="1" height="2" fill="#d08000"/>
<rect x="205" y="324" width="1" height="2" fill="#c87800"/>
<rect x="206" y="324" width="1" height="2" fill="#55b800"/>
<rect x="207" y="324" width="1" height="2" fill="#d08000"/>
<rect x="205" y="349" width="1" height="2" fill="#c87800"/>
<rect x="206" y="349" width="1" height="2" fill="#55b800"/>
<rect x="207" y="349" width="1" height="2" fill="#d08000"/>
<rect x="278" y="199" width="2" height="1" fill="#8f8f00"/>
<rect x="352" y="350" width="1" height="2" fill="#ffff00"/>
<rect x="354" y="351" width="1" height="1" fill="#ffff00"/>
<rect x="355" y="349" width="1" height="3" fill="#b4d400"/>
<rect x="356" y="349" width="1" height="2" fill="#e89400"/>
<polyline points="207.5,294.9 211.1,297.9 218.1,302.2 228.2,305.2 240.9,305.4 255.6,302.5 271.4,298.2 287.6,295.1 303.4,294.8 318.1,297.6 330.8,301.8 340.9,305.1 347.9,305.5 351.5,302.8 351.5,298.6 347.9,295.2 340.9,294.7 330.8,297.3 318.1,301.5 303.4,304.9 287.6,307.0 271.4,311.1 255.6,314.4 240.9,316.4 228.2,316.9 218.1,314.6 211.1,310.4 207.5,306.8 207.5,305.8 211.1,308.0 218.1,312.1 228.2,315.8 240.9,316.9 255.6,314.8 271.4,310.7 287.6,307.0 303.4,305.7 318.1,307.7 330.8,311.8 340.9,315.6 347.9,316.9 351.5,315.1 351.5,311.1 347.9,307.2 340.9,305.7 330.8,307.5 318.1,311.4 303.4,315.3 287.6,317.0 271.4,321.2 255.6,324.8 240.9,327.2 228.2,328.2 218.1,326.7 211.1,322.9 207.5,318.8 207.5,317.0 211.1,318.3 218.1,322.1 228.2,326.2 240.9,328.1 255.6,326.9 271.4,323.2 287.6,319.1 303.4,317.0 318.1,318.1 330.8,321.7 340.9,325.9 347.9,328.1 351.5,327.1 351.5,323.5 347.9,319.4 340.9,317.0 330.8,317.9 318.1,321.4 303.4,325.6 287.6,328.0 271.4,331.2 255.6,335.0 240.9,337.9 228.2,339.3 218.1,338.7 211.1,335.3 207.5,331.1 207.5,328.4 211.1,328.8 218.1,332.1 228.2,336.3 240.9,339.1 255.6,338.8 271.4,335.6 287.6,331.4 303.4,328.5 318.1,328.7 330.8,331.7 340.9,336.0 347.9,339.0 351.5,339.0 351.5,336.0 347.9,331.7 340.9,328.6 330.8,328.5 318.1,331.4 303.4,335.7 287.6,338.8 271.4,341.2 255.6,345.2 240.9,348.4 228.2,350.2 218.1,350.4 211.1,347.7 207.5,343.5 207.5,340.1 211.1,339.6 218.1,342.1 228.2,346.4 240.9,349.8 255.6,350.5 271.4,348.0 287.6,343.8 303.4,340.3 318.1,339.5 330.8,341.8 340.9,346.0 347.9,349.6 351.5,350.5 351.5,348.3 347.9,344.2 340.9,340.5 330.8,339.4 318.1,341.5 303.4,345.6 287.6,349.4 271.4,350.6 255.6,350.6 240.9,350.6 228.2,350.6 218.1,350.6 211.1,350.6 207.5,350.6" stroke="#ff0000" stroke-width="0.8"/>
<polyline points="207.5,294.9 211.1,297.9 218.1,302.2 228.2,305.2 240.9,305.4 255.6,302.5 271.4,298.2 287.6,295.1 303.4,294.8 318.1,297.6 330.8,301.8 340.9,305.1 347.9,305.5 351.5,302.8 351.5,298.6 347.9,295.2 340.9,294.7 330.8,297.3 318.1,301.5 303.4,304.9 287.6,307.0 271.4,311.1 255.6,314.4 240.9,316.4 228.2,316.9 218.1,314.6 211.1,310.4 207.5,306.8 207.5,305.8 211.1,308.0 218.1,312.1 228.2,315.8 240.9,316.9 255.6,314.8 271.4,310.7 287.6,307.0 303.4,305.7 318.1,307.7 330.8,311.8 340.9,315.6 347.9,316.9 351.5,315.1 351.5,311.1 347.9,307.2 340.9,305.7 330.8,307.5 318.1,311.4 303.4,315.3 287.6,317.0 271.4,321.2 255.6,324.8 240.9,327.2 228.2,328.2 218.1,326.7 211.1,322.9 207.5,318.8 207.5,317.0 211.1,318.3 218.1,322.1 228.2,326.2 240.9,328.1 255.6,326.9 271.4,323.2 287.6,319.1 303.4,317.0 318.1,318.1 330.8,321.7 340.9,325.9 347.9,328.1 351.5,327.1 351.5,323.5 347.9,319.4 340.9,317.0 330.8,317.9 318.1,321.4 303.4,325.6 287.6,328.0 271.4,331.2 255.6,335.0 240.9,337.9 228.2,339.3 218.1,338.7 211.1,335.3 207.5,331.1 207.5,328.4 211.1,328.8 218.1,332.1 228.2,336.3 240.9,339.1 255.6,338.8 271.4,335.6 287.6,331.4 303.4,328.5 318.1,328.7 330.8,331.7 340.9,336.0 347.9,339.0 351.5,339.0 351.5,336.0 347.9,331.7 340.9,328.6 330.8,328.5 318.1,331.4 303.4,335.7 287.6,338.8 271.4,341.2 255.6,345.2 240.9,348.4 228.2,350.2 218.1,350.4 211.1,347.7 207.5,343.5 207.5,340.1 211.1,339.6 218.1,342.1 228.2,346.4 240.9,349.8 255.6,350.5 271.4,348.0 287.6,343.8 303.4,340.3 318.1,339.5 330.8,341.8 340.9,346.0 347.9,349.6 351.5,350.5 351.5,348.3 347.9,344.2 340.9,340.5 330.8,339.4 318.1,341.5 303.4,345.6 287.6,349.4 271.4,350.6 255.6,350.6 240.9,350.6 228.2,350.6 218.1,350.6 211.1,350.6 207.5,350.6" stroke="#ff0000" stroke-width="0.8"/>
<polyline points="207.5,294.9 211.1,297.9 218.1,302.2 228.2,305.2 240.9,305.4 255.6,302.5 271.4,298.2 287.6,295.1 303.4,294.8 318.1,297.6 330.8,301.8 340.9,305.1 347.9,305.5 351.5,302.8 351.5,298.6 347.9,295.2 340.9,294.7 330.8,297.3 318.1,301.5 303.4,304.9 287.6,307.0 271.4,311.1 255.6,314.4 240.9,316.4 228.2,316.9 218.1,314.6 211.1,310.4 207.5,306.8 207.5,305.8 211.1,308.0 218.1,312.1 228.2,315.8 240.9,316.9 255.6,314.8 271.4,310.7 287.6,307.0 303.4,305.7 318.1,307.7 330.8,311.8 340.9,315.6 347.9,316.9 351.5,315.1 351.5,311.1 347.9,307.2 340.9,305.7 330.8,307.5 318.1,311.4 303.4,315.3 287.6,317.0 271.4,321.2 255.6,324.8 240.9,327.2 228.2,328.2 218.1,326.7 211.1,322.9 207.5,318.8 207.5,317.0 211.1,318.3 218.1,322.1 228.2,326.2 240.9,328.1 255.6,326.9 271.4,323.2 287.6,319.1 303.4,317.0 318.1,318.1 330.8,321.7 340.9,325.9 347.9,328.1 351.5,327.1 351.5,323.5 347.9,319.4 340.9,317.0 330.8,317.9 318.1,321.4 303.4,325.6 287.6,328.0 271.4,331.2 255.6,335.0 240.9,337.9 228.2,339.3 218.1,338.7 211.1,335.3 207.5,331.1 207.5,328.4 211.1,328.8 218.1,332.1 228.2,336.3 240.9,339.1 255.6,338.8 271.4,335.6 287.6,331.4 303.4,328.5 318.1,328.7 330.8,331.7 340.9,336.0 347.9,339.0 351.5,339.0 351.5,336.0 347.9,331.7 340.9,328.6 330.8,328.5 318.1,331.4 303.4,335.7 287.6,338.8 271.4,341.2 255.6,345.2 240.9,348.4 228.2,350.2 218.1,350.4 211.1,347.7 207.5,343.5 207.5,340.1 211.1,339.6 218.1,342.1 228.2,346.4 240.9,349.8 255.6,350.5 271.4,348.0 287.6,343.8 303.4,340.3 318.1,339.5 330.8,341.8 340.9,346.0 347.9,349.6 351.5,350.5 351.5,348.3 347.9,344.2 340.9,340.5 330.8,339.4 318.1,341.5 303.4,345.6 287.6,349.4 271.4,350.6 255.6,350.6 240.9,350.6 228.2,350.6 218.1,350.6 211.1,350.6 207.5,350.6" stroke="#ff0000" stroke-width="0.8"/>
<polyline points="217.4,294.9 220.5,297.9 226.6,302.2 235.3,305.2 246.2,305.4 258.9,302.5 272.5,298.2 286.5,295.1 300.1,294.8 312.8,297.6 323.7,301.8 332.4,305.1 338.5,305.5 341.6,302.8 341.6,298.6 338.5,295.2 332.4,294.7 323.7,297.3 312.8,301.5 300.1,304.9 286.5,307.0 272.5,311.1 258.9,314.4 246.2,316.4 235.3,316.9 226.6,314.6 220.5,310.4 217.4,306.8 217.4,305.8 220.5,308.0 226.6,312.1 235.3,315.8 246.2,316.9 258.9,314.8 272.5,310.7 286.5,307.0 300.1,305.7 312.8,307.7 323.7,311.8 332.4,315.6 338.5,316.9 341.6,315.1 341.6,311.1 338.5,307.2 332.4,305.7 323.7,307.5 312.8,311.4 300.1,315.3 286.5,317.0 272.5,321.2 258.9,324.8 246.2,327.2 235.3,328.2 226.6,326.7 220.5,322.9 217.4,318.8 217.4,317.0 220.5,318.3 226.6,322.1 235.3,326.2 246.2,328.1 258.9,326.9 272.5,323.2 286.5,319.1 300.1,317.0 312.8,318.1 323.7,321.7 332.4,325.9 338.5,328.1 341.6,327.1 341.6,323.5 338.5,319.4 332.4,317.0 323.7,317.9 312.8,321.4 300.1,325.6 286.5,328.0 272.5,331.2 258.9,335.0 246.2,337.9 235.3,339.3 226.6,338.7 220.5,335.3 217.4,331.1 217.4,328.4 220.5,328.8 226.6,332.1 235.3,336.3 246.2,339.1 258.9,338.8 272.5,335.6 286.5,331.4 300.1,328.5 312.8,328.7 323.7,331.7 332.4,336.0 338.5,339.0 341.6,339.0 341.6,336.0 338.5,331.7 332.4,328.6 323.7,328.5 312.8,331.4 300.1,335.7 286.5,338.8 272.5,341.2 258.9,345.2 246.2,348.4 235.3,350.2 226.6,350.4 220.5,347.7 217.4,343.5 217.4,340.1 220.5,339.6 226.6,342.1 235.3,346.4 246.2,349.8 258.9,350.5 272.5,348.0 286.5,343.8 300.1,340.3 312.8,339.5 323.7,341.8 332.4,346.0 338.5,349.6 341.6,350.5 341.6,348.3 338.5,344.2 332.4,340.5 323.7,339.4 312.8,341.5 300.1,345.6 286.5,349.4 272.5,350.6 258.9,350.6 246.2,350.6 235.3,350.6 226.6,350.6 220.5,350.6 217.4,350.6" stroke="#00ff00" stroke-width="0.8"/>
<polyline points="217.4,294.9 220.5,297.9 226.6,302.2 235.3,305.2 246.2,305.4 258.9,302.5 272.5,298.2 286.5,295.1 300.1,294.8 312.8,297.6 323.7,301.8 332.4,305.1 338.5,305.5 341.6,302.8 341.6,298.6 338.5,295.2 332.4,294.7 323.7,297.3 312.8,301.5 300.1,304.9 286.5,307.0 272.5,311.1 258.9,314.4 246.2,316.4 235.3,316.9 226.6,314.6 220.5,310.4 217.4,306.8 217.4,305.8 220.5,308.0 226.6,312.1 235.3,315.8 246.2,316.9 258.9,314.8 272.5,310.7 286.5,307.0 300.1,305.7 312.8,307.7 323.7,311.8 332.4,315.6 338.5,316.9 341.6,315.1 341.6,311.1 338.5,307.2 332.4,305.7 323.7,307.5 312.8,311.4 300.1,315.3 286.5,317.0 272.5,321.2 258.9,324.8 246.2,327.2 235.3,328.2 226.6,326.7 220.5,322.9 217.4,318.8 217.4,317.0 220.5,318.3 226.6,322.1 235.3,326.2 246.2,328.1 258.9,326.9 272.5,323.2 286.5,319.1 300.1,317.0 312.8,318.1 323.7,321.7 332.4,325.9 338.5,328.1 341.6,327.1 341.6,323.5 338.5,319.4 332.4,317.0 323.7,317.9 312.8,321.4 300.1,325.6 286.5,328.0 272.5,331.2 258.9,335.0 246.2,337.9 235.3,339.3 226.6,338.7 220.5,335.3 217.4,331.1 217.4,328.4 220.5,328.8 226.6,332.1 235.3,336.3 246.2,339.1 258.9,338.8 272.5,335.6 286.5,331.4 300.1,328.5 312.8,328.7 323.7,331.7 332.4,336.0 338.5,339.0 341.6,339.0 341.6,336.0 338.5,331.7 332.4,328.6 323.7,328.5 312.8,331.4 300.1,335.7 286.5,338.8 272.5,341.2 258.9,345.2 246.2,348.4 235.3,350.2 226.6,350.4 220.5,347.7 217.4,343.5 217.4,340.1 220.5,339.6 226.6,342.1 235.3,346.4 246.2,349.8 258.9,350.5 272.5,348.0 286.5,343.8 300.1,340.3 312.8,339.5 323.7,341.8 332.4,346.0 338.5,349.6 341.6,350.5 341.6,348.3 338.5,344.2 332.4,340.5 323.7,339.4 312.8,341.5 300.1,345.6 286.5,349.4 272.5,350.6 258.9,350.6 246.2,350.6 235.3,350.6 226.6,350.6 220.5,350.6 217.4,350.6" stroke="#00ff00" stroke-width="0.8"/>
<polyline points="217.4,294.9 220.5,297.9 226.6,302.2 235.3,305.2 246.2,305.4 258.9,302.5 272.5,298.2 286.5,295.1 300.1,294.8 312.8,297.6 323.7,301.8 332.4,305.1 338.5,305.5 341.6,302.8 341.6,298.6 338.5,295.2 332.4,294.7 323.7,297.3 312.8,301.5 300.1,304.9 286.5,307.0 272.5,311.1 258.9,314.4 246.2,316.4 235.3,316.9 226.6,314.6 220.5,310.4 217.4,306.8 217.4,305.8 220.5,308.0 226.6,312.1 235.3,315.8 246.2,316.9 258.9,314.8 272.5,310.7 286.5,307.0 300.1,305.7 312.8,307.7 323.7,311.8 332.4,315.6 338.5,316.9 341.6,315.1 341.6,311.1 338.5,307.2 332.4,305.7 323.7,307.5 312.8,311.4 300.1,315.3 286.5,317.0 272.5,321.2 258.9,324.8 246.2,327.2 235.3,328.2 226.6,326.7 220.5,322.9 217.4,318.8 217.4,317.0 220.5,318.3 226.6,322.1 235.3,326.2 246.2,328.1 258.9,326.9 272.5,323.2 286.5,319.1 300.1,317.0 312.8,318.1 323.7,321.7 332.4,325.9 338.5,328.1 341.6,327.1 341.6,323.5 338.5,319.4 332.4,317.0 323.7,317.9 312.8,321.4 300.1,325.6 286.5,328.0 272.5,331.2 258.9,335.0 246.2,337.9 235.3,339.3 226.6,338.7 220.5,335.3 217.4,331.1 217.4,328.4 220.5,328.8 226.6,332.1 235.3,336.3 246.2,339.1 258.9,338.8 272.5,335.6 286.5,331.4 300.1,328.5 312.8,328.7 323.7,331.7 332.4,336.0 338.5,339.0 341.6,339.0 341.6,336.0 338.5,331.7 332.4,328.6 323.7,328.5 312.8,331.4 300.1,335.7 286.5,338.8 272.5,341.2 258.9,345.2 246.2,348.4 235.3,350.2 226.6,350.4 220.5,347.7 217.4,343.5 217.4,340.1 220.5,339.6 226.6,342.1 235.3,346.4 246.2,349.8 258.9,350.5 272.5,348.0 286.5,343.8 300.1,340.3 312.8,339.5 323.7,341.8 332.4,346.0 338.5,349.6 341.6,350.5 341.6,348.3 338.5,344.2 332.4,340.5 323.7,339.4 312.8,341.5 300.1,345.6 286.5,349.4 272.5,350.6 258.9,350.6 246.2,350.6 235.3,350.6 226.6,350.6 220.5,350.6 217.4,350.6" stroke="#00ff00" stroke-width="0.8"/>
<polyline points="207.5,293.7 211.1,296.7 218.1,301.0 228.2,304.0 240.9,304.2 255.6,301.3 271.4,297.0 287.6,293.9 303.4,293.6 318.1,296.4 330.8,300.6 340.9,303.9 347.9,304.3 351.5,301.6 351.5,297.4 347.9,294.0 340.9,293.5 330.8,296.1 318.1,300.3 303.4,303.7 287.6,305.8 271.4,309.9 255.6,313.2 240.9,315.2 228.2,315.7 218.1,313.4 211.1,309.2 207.5,305.6 207.5,304.6 211.1,306.8 218.1,310.9 228.2,314.6 240.9,315.7 255.6,313.6 271.4,309.5 287.6,305.8 303.4,304.5 318.1,306.5 330.8,310.6 340.9,314.4 347.9,315.7 351.5,313.9 351.5,309.9 347.9,306.0 340.9,304.5 330.8,306.3 318.1,310.2 303.4,314.1 287.6,315.8 271.4,320.0 255.6,323.6 240.9,326.0 228.2,327.0 218.1,325.5 211.1,321.7 207.5,317.6 207.5,315.8 211.1,317.1 218.1,320.9 228.2,325.0 240.9,326.9 255.6,325.7 271.4,322.0 287.6,317.9 303.4,315.8 318.1,316.9 330.8,320.5 340.9,324.7 347.9,326.9 351.5,325.9 351.5,322.3 347.9,318.2 340.9,315.8 330.8,316.7 318.1,320.2 303.4,324.4 287.6,326.8 271.4,330.0 255.6,333.8 240.9,336.7 228.2,338.1 218.1,337.5 211.1,334.1 207.5,329.9 207.5,327.2 211.1,327.6 218.1,330.9 228.2,335.1 240.9,337.9 255.6,337.6 271.4,334.4 287.6,330.2 303.4,327.3 318.1,327.5 330.8,330.5 340.9,334.8 347.9,337.8 351.5,337.8 351.5,334.8 347.9,330.5 340.9,327.4 330.8,327.3 318.1,330.2 303.4,334.5 287.6,337.6 271.4,340.0 255.6,344.0 240.9,347.2 228.2,349.0 218.1,349.2 211.1,346.5 207.5,342.3 207.5,338.9 211.1,338.4 218.1,340.9 228.2,345.2 240.9,348.6 255.6,349.3 271.4,346.8 287.6,342.6 303.4,339.1 318.1,338.3 330.8,340.6 340.9,344.8 347.9,348.4 351.5,349.3 351.5,347.1 347.9,343.0 340.9,339.3 330.8,338.2 318.1,340.3 303.4,344.4 287.6,348.2 271.4,349.4 255.6,349.4 240.9,349.4 228.2,349.4 218.1,349.4 211.1,349.4 207.5,349.4" stroke="#00ffff" stroke-width="0.8"/>
<polyline points="207.5,293.7 211.1,296.7 218.1,301.0 228.2,304.0 240.9,304.2 255.6,301.3 271.4,297.0 287.6,293.9 303.4,293.6 318.1,296.4 330.8,300.6 340.9,303.9 347.9,304.3 351.5,301.6 351.5,297.4 347.9,294.0 340.9,293.5 330.8,296.1 318.1,300.3 303.4,303.7 287.6,305.8 271.4,309.9 255.6,313.2 240.9,315.2 228.2,315.7 218.1,313.4 211.1,309.2 207.5,305.6 207.5,304.6 211.1,306.8 218.1,310.9 228.2,314.6 240.9,315.7 255.6,313.6 271.4,309.5 287.6,305.8 303.4,304.5 318.1,306.5 330.8,310.6 340.9,314.4 347.9,315.7 351.5,313.9 351.5,309.9 347.9,306.0 340.9,304.5 330.8,306.3 318.1,310.2 303.4,314.1 287.6,315.8 271.4,320.0 255.6,323.6 240.9,326.0 228.2,327.0 218.1,325.5 211.1,321.7 207.5,317.6 207.5,315.8 211.1,317.1 218.1,320.9 228.2,325.0 240.9,326.9 255.6,325.7 271.4,322.0 287.6,317.9 303.4,315.8 318.1,316.9 330.8,320.5 340.9,324.7 347.9,326.9 351.5,325.9 351.5,322.3 347.9,318.2 340.9,315.8 330.8,316.7 318.1,320.2 303.4,324.4 287.6,326.8 271.4,330.0 255.6,333.8 240.9,336.7 228.2,338.1 218.1,337.5 211.1,334.1 207.5,329.9 207.5,327.2 211.1,327.6 218.1,330.9 228.2,335.1 240.9,337.9 255.6,337.6 271.4,334.4 287.6,330.2 303.4,327.3 318.1,327.5 330.8,330.5 340.9,334.8 347.9,337.8 351.5,337.8 351.5,334.8 347.9,330.5 340.9,327.4 330.8,327.3 318.1,330.2 303.4,334.5 287.6,337.6 271.4,340.0 255.6,344.0 240.9,347.2 228.2,349.0 218.1,349.2 211.1,346.5 207.5,342.3 207.5,338.9 211.1,338.4 218.1,340.9 228.2,345.2 240.9,348.6 255.6,349.3 271.4,346.8 287.6,342.6 303.4,339.1 318.1,338.3 330.8,340.6 340.9,344.8 347.9,348.4 351.5,349.3 351.5,347.1 347.9,343.0 340.9,339.3 330.8,338.2 318.1,340.3 303.4,344.4 287.6,348.2 271.4,349.4 255.6,349.4 240.9,349.4 228.2,349.4 218.1,349.4 211.1,349.4 207.5,349.4" stroke="#00ffff" stroke-width="0.8"/>
<polyline points="207.5,293.7 211.1,296.7 218.1,301.0 228.2,304.0 240.9,304.2 255.6,301.3 271.4,297.0 287.6,293.9 303.4,293.6 318.1,296.4 330.8,300.6 340.9,303.9 347.9,304.3 351.5,301.6 351.5,297.4 347.9,294.0 340.9,293.5 330.8,296.1 318.1,300.3 303.4,303.7 287.6,305.8 271.4,309.9 255.6,313.2 240.9,315.2 228.2,315.7 218.1,313.4 211.1,309.2 207.5,305.6 207.5,304.6 211.1,306.8 218.1,310.9 228.2,314.6 240.9,315.7 255.6,313.6 271.4,309.5 287.6,305.8 303.4,304.5 318.1,306.5 330.8,310.6 340.9,314.4 347.9,315.7 351.5,313.9 351.5,309.9 347.9,306.0 340.9,304.5 330.8,306.3 318.1,310.2 303.4,314.1 287.6,315.8 271.4,320.0 255.6,323.6 240.9,326.0 228.2,327.0 218.1,325.5 211.1,321.7 207.5,317.6 207.5,315.8 211.1,317.1 218.1,320.9 228.2,325.0 240.9,326.9 255.6,325.7 271.4,322.0 287.6,317.9 303.4,315.8 318.1,316.9 330.8,320.5 340.9,324.7 347.9,326.9 351.5,325.9 351.5,322.3 347.9,318.2 340.9,315.8 330.8,316.7 318.1,320.2 303.4,324.4 287.6,326.8 271.4,330.0 255.6,333.8 240.9,336.7 228.2,338.1 218.1,337.5 211.1,334.1 207.5,329.9 207.5,327.2 211.1,327.6 218.1,330.9 228.2,335.1 240.9,337.9 255.6,337.6 271.4,334.4 287.6,330.2 303.4,327.3 318.1,327.5 330.8,330.5 340.9,334.8 347.9,337.8 351.5,337.8 351.5,334.8 347.9,330.5 340.9,327.4 330.8,327.3 318.1,330.2 303.4,334.5 287.6,337.6 271.4,340.0 255.6,344.0 240.9,347.2 228.2,349.0 218.1,349.2 211.1,346.5 207.5,342.3 207.5,338.9 211.1,338.4 218.1,340.9 228.2,345.2 240.9,348.6 255.6,349.3 271.4,346.8 287.6,342.6 303.4,339.1 318.1,338.3 330.8,340.6 340.9,344.8 347.9,348.4 351.5,349.3 351.5,347.1 347.9,343.0 340.9,339.3 330.8,338.2 318.1,340.3 303.4,344.4 287.6,348.2 271.4,349.4 255.6,349.4 240.9,349.4 228.2,349.4 218.1,349.4 211.1,349.4 207.5,349.4" stroke="#00ffff" stroke-width="0.8"/>
<polyline points="217.4,293.7 220.5,296.7 226.6,301.0 235.3,304.0 246.2,304.2 258.9,301.3 272.5,297.0 286.5,293.9 300.1,293.6 312.8,296.4 323.7,300.6 332.4,303.9 338.5,304.3 341.6,301.6 341.6,297.4 338.5,294.0 332.4,293.5 323.7,296.1 312.8,300.3 300.1,303.7 286.5,305.8 272.5,309.9 258.9,313.2 246.2,315.2 235.3,315.7 226.6,313.4 220.5,309.2 217.4,305.6 217.4,304.6 220.5,306.8 226.6,310.9 235.3,314.6 246.2,315.7 258.9,313.6 272.5,309.5 286.5,305.8 300.1,304.5 312.8,306.5 323.7,310.6 332.4,314.4 338.5,315.7 341.6,313.9 341.6,309.9 338.5,306.0 332.4,304.5 323.7,306.3 312.8,310.2 300.1,314.1 286.5,315.8 272.5,320.0 258.9,323.6 246.2,326.0 235.3,327.0 226.6,325.5 220.5,321.7 217.4,317.6 217.4,315.8 220.5,317.1 226.6,320.9 235.3,325.0 246.2,326.9 258.9,325.7 272.5,322.0 286.5,317.9 300.1,315.8 312.8,316.9 323.7,320.5 332.4,324.7 338.5,326.9 341.6,325.9 341.6,322.3 338.5,318.2 332.4,315.8 323.7,316.7 312.8,320.2 300.1,324.4 286.5,326.8 272.5,330.0 258.9,333.8 246.2,336.7 235.3,338.1 226.6,337.5 220.5,334.1 217.4,329.9 217.4,327.2 220.5,327.6 226.6,330.9 235.3,335.1 246.2,337.9 258.9,337.6 272.5,334.4 286.5,330.2 300.1,327.3 312.8,327.5 323.7,330.5 332.4,334.8 338.5,337.8 341.6,337.8 341.6,334.8 338.5,330.5 332.4,327.4 323.7,327.3 312.8,330.2 300.1,334.5 286.5,337.6 272.5,340.0 258.9,344.0 246.2,347.2 235.3,349.0 226.6,349.2 220.5,346.5 217.4,342.3 217.4,338.9 220.5,338.4 226.6,340.9 235.3,345.2 246.2,348.6 258.9,349.3 272.5,346.8 286.5,342.6 300.1,339.1 312.8,338.3 323.7,340.6 332.4,344.8 338.5,348.4 341.6,349.3 341.6,347.1 338.5,343.0 332.4,339.3 323.7,338.2 312.8,340.3 300.1,344.4 286.5,348.2 272.5,349.4 258.9,349.4 246.2,349.4 235.3,349.4 226.6,349.4 220.5,349.4 217.4,349.4" stroke="#ff00ff" stroke-width="0.8"/>
<polyline points="217.4,293.7 220.5,296.7 226.6,301.0 235.3,304.0 246.2,304.2 258.9,301.3 272.5,297.0 286.5,293.9 300.1,293.6 312.8,296.4 323.7,300.6 332.4,303.9 338.5,304.3 341.6,301.6 341.6,297.4 338.5,294.0 332.4,293.5 323.7,296.1 312.8,300.3 300.1,303.7 286.5,305.8 272.5,309.9 258.9,313.2 246.2,315.2 235.3,315.7 226.6,313.4 220.5,309.2 217.4,305.6 217.4,304.6 220.5,306.8 226.6,310.9 235.3,314.6 246.2,315.7 258.9,313.6 272.5,309.5 286.5,305.8 300.1,304.5 312.8,306.5 323.7,310.6 332.4,314.4 338.5,315.7 341.6,313.9 341.6,309.9 338.5,306.0 332.4,304.5 323.7,306.3 312.8,310.2 300.1,314.1 286.5,315.8 272.5,320.0 258.9,323.6 246.2,326.0 235.3,327.0 226.6,325.5 220.5,321.7 217.4,317.6 217.4,315.8 220.5,317.1 226.6,320.9 235.3,325.0 246.2,326.9 258.9,325.7 272.5,322.0 286.5,317.9 300.1,315.8 312.8,316.9 323.7,320.5 332.4,324.7 338.5,326.9 341.6,325.9 341.6,322.3 338.5,318.2 332.4,315.8 323.7,316.7 312.8,320.2 300.1,324.4 286.5,326.8 272.5,330.0 258.9,333.8 246.2,336.7 235.3,338.1 226.6,337.5 220.5,334.1 217.4,329.9 217.4,327.2 220.5,327.6 226.6,330.9 235.3,335.1 246.2,337.9 258.9,337.6 272.5,334.4 286.5,330.2 300.1,327.3 312.8,327.5 323.7,330.5 332.4,334.8 338.5,337.8 341.6,337.8 341.6,334.8 338.5,330.5 332.4,327.4 323.7,327.3 312.8,330.2 300.1,334.5 286.5,337.6 272.5,340.0 258.9,344.0 246.2,347.2 235.3,349.0 226.6,349.2 220.5,346.5 217.4,342.3 217.4,338.9 220.5,338.4 226.6,340.9 235.3,345.2 246.2,348.6 258.9,349.3 272.5,346.8 286.5,342.6 300.1,339.1 312.8,338.3 323.7,340.6 332.4,344.8 338.5,348.4 341.6,349.3 341.6,347.1 338.5,343.0 332.4,339.3 323.7,338.2 312.8,340.3 300.1,344.4 286.5,348.2 272.5,349.4 258.9,349.4 246.2,349.4 235.3,349.4 226.6,349.4 220.5,349.4 217.4,349.4" stroke="#ff00ff" stroke-width="0.8"/>
<polyline points="217.4,293.7 220.5,296.7 226.6,301.0 235.3,304.0 246.2,304.2 258.9,301.3 272.5,297.0 286.5,293.9 300.1,293.6 312.8,296.4 323.7,300.6 332.4,303.9 338.5,304.3 341.6,301.6 341.6,297.4 338.5,294.0 332.4,293.5 323.7,296.1 312.8,300.3 300.1,303.7 286.5,305.8 272.5,309.9 258.9,313.2 246.2,315.2 235.3,315.7 226.6,313.4 220.5,309.2 217.4,305.6 217.4,304.6 220.5,306.8 226.6,310.9 235.3,314.6 246.2,315.7 258.9,313.6 272.5,309.5 286.5,305.8 300.1,304.5 312.8,306.5 323.7,310.6 332.4,314.4 338.5,315.7 341.6,313.9 341.6,309.9 338.5,306.0 332.4,304.5 323.7,306.3 312.8,310.2 300.1,314.1 286.5,315.8 272.5,320.0 258.9,323.6 246.2,326.0 235.3,327.0 226.6,325.5 220.5,321.7 217.4,317.6 217.4,315.8 220.5,317.1 226.6,320.9 235.3,325.0 246.2,326.9 258.9,325.7 272.5,322.0 286.5,317.9 300.1,315.8 312.8,316.9 323.7,320.5 332.4,324.7 338.5,326.9 341.6,325.9 341.6,322.3 338.5,318.2 332.4,315.8 323.7,316.7 312.8,320.2 300.1,324.4 286.5,326.8 272.5,330.0 258.9,333.8 246.2,336.7 235.3,338.1 226.6,337.5 220.5,334.1 217.4,329.9 217.4,327.2 220.5,327.6 226.6,330.9 235.3,335.1 246.2,337.9 258.9,337.6 272.5,334.4 286.5,330.2 300.1,327.3 312.8,327.5 323.7,330.5 332.4,334.8 338.5,337.8 341.6,337.8 341.6,334.8 338.5,330.5 332.4,327.4 323.7,327.3 312.8,330.2 300.1,334.5 286.5,337.6 272.5,340.0 258.9,344.0 246.2,347.2 235.3,349.0 226.6,349.2 220.5,346.5 217.4,342.3 217.4,338.9 220.5,338.4 226.6,340.9 235.3,345.2 246.2,348.6 258.9,349.3 272.5,346.8 286.5,342.6 300.1,339.1 312.8,338.3 323.7,340.6 332.4,344.8 338.5,348.4 341.6,349.3 341.6,347.1 338.5,343.0 332.4,339.3 323.7,338.2 312.8,340.3 300.1,344.4 286.5,348.2 272.5,349.4 258.9,349.4 246.2,349.4 235.3,349.4 226.6,349.4 220.5,349.4 217.4,349.4" stroke="#ff00ff" stroke-width="0.8"/>
<line x1="206" y1="292.5" x2="352" y2="292.5" stroke="#ff0000" stroke-width="1"/>
<line x1="216" y1="292.5" x2="342" y2="292.5" stroke="#00ff00" stroke-width="1"/>
<line x1="206" y1="291.5" x2="352" y2="291.5" stroke="#00ffff" stroke-width="1"/>
<line x1="216" y1="291.5" x2="342" y2="291.5" stroke="#ff00ff" stroke-width="1"/>
<line x1="206" y1="350.5" x2="352" y2="350.5" stroke="#00ffff" stroke-width="1"/>
<line x1="216" y1="350.5" x2="342" y2="350.5" stroke="#ff00ff" stroke-width="1"/>
<line x1="206" y1="351.5" x2="352" y2="351.5" stroke="#ff0000" stroke-width="1"/>
<line x1="216" y1="351.5" x2="342" y2="351.5" stroke="#00ff00" stroke-width="1"/>
</g>
<text x="219.5" y="367" font-size="14" fill="#ff00ff" textLength="70.2" lengthAdjust="spacingAndGlyphs">L1 = 12 mm</text>
<g class="spring" shape-rendering="crispEdges" fill="none" stroke-width="1">
<line x1="376" y1="201.5" x2="526" y2="201.5" stroke="#ffff00" stroke-width="1" stroke-dasharray="3 3" stroke-dashoffset="0"/>
<line x1="376" y1="226.5" x2="526" y2="226.5" stroke="#ffff00" stroke-width="1" stroke-dasharray="3 3" stroke-dashoffset="0"/>
<line x1="376" y1="251.5" x2="526" y2="251.5" stroke="#ffff00" stroke-width="1" stroke-dasharray="3 3" stroke-dashoffset="0"/>
<line x1="376" y1="276.5" x2="526" y2="276.5" stroke="#ffff00" stroke-width="1" stroke-dasharray="3 3" stroke-dashoffset="0"/>
<line x1="376" y1="301.5" x2="526" y2="301.5" stroke="#ffff00" stroke-width="1" stroke-dasharray="3 3" stroke-dashoffset="0"/>
<line x1="376" y1="326.5" x2="526" y2="326.5" stroke="#ffff00" stroke-width="1" stroke-dasharray="3 3" stroke-dashoffset="0"/>
<line x1="376" y1="351.5" x2="526" y2="351.5" stroke="#ffff00" stroke-width="1" stroke-dasharray="3 3" stroke-dashoffset="0"/>
<line x1="376.5" y1="352" x2="376.5" y2="201" stroke="#ffff00" stroke-width="1" stroke-dasharray="3 3" stroke-dashoffset="0"/>
<line x1="401.5" y1="352" x2="401.5" y2="201" stroke="#ffff00" stroke-width="1" stroke-dasharray="3 3" stroke-dashoffset="0"/>
<line x1="426.5" y1="352" x2="426.5" y2="201" stroke="#ffff00" stroke-width="1" stroke-dasharray="3 3" stroke-dashoffset="0"/>
<line x1="476.5" y1="352" x2="476.5" y2="201" stroke="#ffff00" stroke-width="1" stroke-dasharray="3 3" stroke-dashoffset="0"/>
<line x1="501.5" y1="352" x2="501.5" y2="201" stroke="#ffff00" stroke-width="1" stroke-dasharray="3 3" stroke-dashoffset="0"/>
<line x1="525.5" y1="352" x2="525.5" y2="201" stroke="#ffff00" stroke-width="1" stroke-dasharray="3 3" stroke-dashoffset="0"/>
<line x1="451.5" y1="201" x2="451.5" y2="352" stroke="#ffff00" stroke-width="1"/>
<rect x="376" y="199" width="1" height="2" fill="#55b800"/>
<rect x="377" y="199" width="1" height="2" fill="#c87800"/>
<rect x="378" y="199" width="1" height="2" fill="#6ab000"/>
<rect x="379" y="199" width="1" height="2" fill="#e08c00"/>
<rect x="377" y="224" width="1" height="2" fill="#c87800"/>
<rect x="378" y="224" width="1" height="2" fill="#55b800"/>
<rect x="379" y="224" width="1" height="2" fill="#d08000"/>
<rect x="377" y="249" width="1" height="2" fill="#c87800"/>
<rect x="378" y="249" width="1" height="2" fill="#55b800"/>
<rect x="379" y="249" width="1" height="2" fill="#d08000"/>
<rect x="377" y="274" width="1" height="2" fill="#c87800"/>
<rect x="378" y="274" width="1" height="2" fill="#55b800"/>
<rect x="379" y="274" width="1" height="2" fill="#d08000"/>
<rect x="377" y="299" width="1" height="2" fill="#c87800"/>
<rect x="378" y="299" width="1" height="2" fill="#55b800"/>
<rect x="379" y="299" width="1" height="2" fill="#d08000"/>
<rect x="377" y="324" width="1" height="2" fill="#c87800"/>
<rect x="378" y="324" width="1" height="2" fill="#55b800"/>
<rect x="379" y="324" width="1" height="2" fill="#d08000"/>
<rect x="377" y="349" width="1" height="2" fill="#c87800"/>
<rect x="378" y="349" width="1" height="2" fill="#55b800"/>
<rect x="379" y="349" width="1" height="2" fill="#d08000"/>
<rect x="450" y="199" width="2" height="1" fill="#8f8f00"/>
<rect x="524" y="350" width="1" height="2" fill="#ffff00"/>
<rect x="526" y="351" width="1" height="1" fill="#ffff00"/>
<rect x="527" y="349" width="1" height="3" fill="#b4d400"/>
<rect x="528" y="349" width="1" height="2" fill="#e89400"/>
<polyline points="379.5,309.8 383.1,312.0 390.1,315.1 400.2,317.4 412.9,317.5 427.6,315.3 443.4,312.2 459.6,309.9 475.4,309.7 490.1,311.8 502.8,314.9 512.9,317.2 519.9,317.5 523.5,315.6 523.5,312.5 519.9,310.0 512.9,309.6 502.8,311.5 490.1,314.6 475.4,317.1 459.6,318.6 443.4,321.6 427.6,324.1 412.9,325.6 400.2,325.9 390.1,324.2 383.1,321.1 379.5,318.5 379.5,317.8 383.1,319.4 390.1,322.4 400.2,325.1 412.9,325.9 427.6,324.4 443.4,321.4 459.6,318.6 475.4,317.7 490.1,319.2 502.8,322.2 512.9,324.9 519.9,325.9 523.5,324.6 523.5,321.6 519.9,318.8 512.9,317.7 502.8,319.0 490.1,321.9 475.4,324.8 459.6,326.0 443.4,329.0 427.6,331.7 412.9,333.5 400.2,334.2 390.1,333.1 383.1,330.3 379.5,327.3 379.5,325.9 383.1,326.9 390.1,329.7 400.2,332.7 412.9,334.1 427.6,333.2 443.4,330.5 459.6,327.5 475.4,326.0 490.1,326.8 502.8,329.5 512.9,332.5 519.9,334.1 523.5,333.4 523.5,330.8 519.9,327.7 512.9,326.0 502.8,326.6 490.1,329.2 475.4,332.3 459.6,334.1 443.4,336.4 427.6,339.2 412.9,341.3 400.2,342.3 390.1,341.9 383.1,339.4 379.5,336.3 379.5,334.3 383.1,334.6 390.1,337.0 400.2,340.1 412.9,342.2 427.6,342.0 443.4,339.6 459.6,336.5 475.4,334.4 490.1,334.5 502.8,336.8 512.9,339.9 519.9,342.1 523.5,342.1 523.5,339.9 519.9,336.8 512.9,334.5 502.8,334.4 490.1,336.5 475.4,339.7 459.6,342.0 443.4,343.7 427.6,346.7 412.9,349.0 400.2,350.3 390.1,350.4 383.1,348.5 379.5,345.4 379.5,342.9 383.1,342.5 390.1,344.4 400.2,347.5 412.9,350.0 427.6,350.5 443.4,348.7 459.6,345.6 475.4,343.1 490.1,342.5 502.8,344.2 512.9,347.2 519.9,349.9 523.5,350.5 523.5,348.9 519.9,345.9 512.9,343.2 502.8,342.4 490.1,344.0 475.4,347.0 459.6,349.7 443.4,350.6 427.6,350.6 412.9,350.6 400.2,350.6 390.1,350.6 383.1,350.6 379.5,350.6" stroke="#ff0000" stroke-width="0.8"/>
<polyline points="379.5,309.8 383.1,312.0 390.1,315.1 400.2,317.4 412.9,317.5 427.6,315.3 443.4,312.2 459.6,309.9 475.4,309.7 490.1,311.8 502.8,314.9 512.9,317.2 519.9,317.5 523.5,315.6 523.5,312.5 519.9,310.0 512.9,309.6 502.8,311.5 490.1,314.6 475.4,317.1 459.6,318.6 443.4,321.6 427.6,324.1 412.9,325.6 400.2,325.9 390.1,324.2 383.1,321.1 379.5,318.5 379.5,317.8 383.1,319.4 390.1,322.4 400.2,325.1 412.9,325.9 427.6,324.4 443.4,321.4 459.6,318.6 475.4,317.7 490.1,319.2 502.8,322.2 512.9,324.9 519.9,325.9 523.5,324.6 523.5,321.6 519.9,318.8 512.9,317.7 502.8,319.0 490.1,321.9 475.4,324.8 459.6,326.0 443.4,329.0 427.6,331.7 412.9,333.5 400.2,334.2 390.1,333.1 383.1,330.3 379.5,327.3 379.5,325.9 383.1,326.9 390.1,329.7 400.2,332.7 412.9,334.1 427.6,333.2 443.4,330.5 459.6,327.5 475.4,326.0 490.1,326.8 502.8,329.5 512.9,332.5 519.9,334.1 523.5,333.4 523.5,330.8 519.9,327.7 512.9,326.0 502.8,326.6 490.1,329.2 475.4,332.3 459.6,334.1 443.4,336.4 427.6,339.2 412.9,341.3 400.2,342.3 390.1,341.9 383.1,339.4 379.5,336.3 379.5,334.3 383.1,334.6 390.1,337.0 400.2,340.1 412.9,342.2 427.6,342.0 443.4,339.6 459.6,336.5 475.4,334.4 490.1,334.5 502.8,336.8 512.9,339.9 519.9,342.1 523.5,342.1 523.5,339.9 519.9,336.8 512.9,334.5 502.8,334.4 490.1,336.5 475.4,339.7 459.6,342.0 443.4,343.7 427.6,346.7 412.9,349.0 400.2,350.3 390.1,350.4 383.1,348.5 379.5,345.4 379.5,342.9 383.1,342.5 390.1,344.4 400.2,347.5 412.9,350.0 427.6,350.5 443.4,348.7 459.6,345.6 475.4,343.1 490.1,342.5 502.8,344.2 512.9,347.2 519.9,349.9 523.5,350.5 523.5,348.9 519.9,345.9 512.9,343.2 502.8,342.4 490.1,344.0 475.4,347.0 459.6,349.7 443.4,350.6 427.6,350.6 412.9,350.6 400.2,350.6 390.1,350.6 383.1,350.6 379.5,350.6" stroke="#ff0000" stroke-width="0.8"/>
<polyline points="379.5,309.8 383.1,312.0 390.1,315.1 400.2,317.4 412.9,317.5 427.6,315.3 443.4,312.2 459.6,309.9 475.4,309.7 490.1,311.8 502.8,314.9 512.9,317.2 519.9,317.5 523.5,315.6 523.5,312.5 519.9,310.0 512.9,309.6 502.8,311.5 490.1,314.6 475.4,317.1 459.6,318.6 443.4,321.6 427.6,324.1 412.9,325.6 400.2,325.9 390.1,324.2 383.1,321.1 379.5,318.5 379.5,317.8 383.1,319.4 390.1,322.4 400.2,325.1 412.9,325.9 427.6,324.4 443.4,321.4 459.6,318.6 475.4,317.7 490.1,319.2 502.8,322.2 512.9,324.9 519.9,325.9 523.5,324.6 523.5,321.6 519.9,318.8 512.9,317.7 502.8,319.0 490.1,321.9 475.4,324.8 459.6,326.0 443.4,329.0 427.6,331.7 412.9,333.5 400.2,334.2 390.1,333.1 383.1,330.3 379.5,327.3 379.5,325.9 383.1,326.9 390.1,329.7 400.2,332.7 412.9,334.1 427.6,333.2 443.4,330.5 459.6,327.5 475.4,326.0 490.1,326.8 502.8,329.5 512.9,332.5 519.9,334.1 523.5,333.4 523.5,330.8 519.9,327.7 512.9,326.0 502.8,326.6 490.1,329.2 475.4,332.3 459.6,334.1 443.4,336.4 427.6,339.2 412.9,341.3 400.2,342.3 390.1,341.9 383.1,339.4 379.5,336.3 379.5,334.3 383.1,334.6 390.1,337.0 400.2,340.1 412.9,342.2 427.6,342.0 443.4,339.6 459.6,336.5 475.4,334.4 490.1,334.5 502.8,336.8 512.9,339.9 519.9,342.1 523.5,342.1 523.5,339.9 519.9,336.8 512.9,334.5 502.8,334.4 490.1,336.5 475.4,339.7 459.6,342.0 443.4,343.7 427.6,346.7 412.9,349.0 400.2,350.3 390.1,350.4 383.1,348.5 379.5,345.4 379.5,342.9 383.1,342.5 390.1,344.4 400.2,347.5 412.9,350.0 427.6,350.5 443.4,348.7 459.6,345.6 475.4,343.1 490.1,342.5 502.8,344.2 512.9,347.2 519.9,349.9 523.5,350.5 523.5,348.9 519.9,345.9 512.9,343.2 502.8,342.4 490.1,344.0 475.4,347.0 459.6,349.7 443.4,350.6 427.6,350.6 412.9,350.6 400.2,350.6 390.1,350.6 383.1,350.6 379.5,350.6" stroke="#ff0000" stroke-width="0.8"/>
<polyline points="389.4,309.8 392.5,312.0 398.6,315.1 407.3,317.4 418.2,317.5 430.9,315.3 444.5,312.2 458.5,309.9 472.1,309.7 484.8,311.8 495.7,314.9 504.4,317.2 510.5,317.5 513.6,315.6 513.6,312.5 510.5,310.0 504.4,309.6 495.7,311.5 484.8,314.6 472.1,317.1 458.5,318.6 444.5,321.6 430.9,324.1 418.2,325.6 407.3,325.9 398.6,324.2 392.5,321.1 389.4,318.5 389.4,317.8 392.5,319.4 398.6,322.4 407.3,325.1 418.2,325.9 430.9,324.4 444.5,321.4 458.5,318.6 472.1,317.7 484.8,319.2 495.7,322.2 504.4,324.9 510.5,325.9 513.6,324.6 513.6,321.6 510.5,318.8 504.4,317.7 495.7,319.0 484.8,321.9 472.1,324.8 458.5,326.0 444.5,329.0 430.9,331.7 418.2,333.5 407.3,334.2 398.6,333.1 392.5,330.3 389.4,327.3 389.4,325.9 392.5,326.9 398.6,329.7 407.3,332.7 418.2,334.1 430.9,333.2 444.5,330.5 458.5,327.5 472.1,326.0 484.8,326.8 495.7,329.5 504.4,332.5 510.5,334.1 513.6,333.4 513.6,330.8 510.5,327.7 504.4,326.0 495.7,326.6 484.8,329.2 472.1,332.3 458.5,334.1 444.5,336.4 430.9,339.2 418.2,341.3 407.3,342.3 398.6,341.9 392.5,339.4 389.4,336.3 389.4,334.3 392.5,334.6 398.6,337.0 407.3,340.1 418.2,342.2 430.9,342.0 444.5,339.6 458.5,336.5 472.1,334.4 484.8,334.5 495.7,336.8 504.4,339.9 510.5,342.1 513.6,342.1 513.6,339.9 510.5,336.8 504.4,334.5 495.7,334.4 484.8,336.5 472.1,339.7 458.5,342.0 444.5,343.7 430.9,346.7 418.2,349.0 407.3,350.3 398.6,350.4 392.5,348.5 389.4,345.4 389.4,342.9 392.5,342.5 398.6,344.4 407.3,347.5 418.2,350.0 430.9,350.5 444.5,348.7 458.5,345.6 472.1,343.1 484.8,342.5 495.7,344.2 504.4,347.2 510.5,349.9 513.6,350.5 513.6,348.9 510.5,345.9 504.4,343.2 495.7,342.4 484.8,344.0 472.1,347.0 458.5,349.7 444.5,350.6 430.9,350.6 418.2,350.6 407.3,350.6 398.6,350.6 392.5,350.6 389.4,350.6" stroke="#00ff00" stroke-width="0.8"/>
<polyline points="389.4,309.8 392.5,312.0 398.6,315.1 407.3,317.4 418.2,317.5 430.9,315.3 444.5,312.2 458.5,309.9 472.1,309.7 484.8,311.8 495.7,314.9 504.4,317.2 510.5,317.5 513.6,315.6 513.6,312.5 510.5,310.0 504.4,309.6 495.7,311.5 484.8,314.6 472.1,317.1 458.5,318.6 444.5,321.6 430.9,324.1 418.2,325.6 407.3,325.9 398.6,324.2 392.5,321.1 389.4,318.5 389.4,317.8 392.5,319.4 398.6,322.4 407.3,325.1 418.2,325.9 430.9,324.4 444.5,321.4 458.5,318.6 472.1,317.7 484.8,319.2 495.7,322.2 504.4,324.9 510.5,325.9 513.6,324.6 513.6,321.6 510.5,318.8 504.4,317.7 495.7,319.0 484.8,321.9 472.1,324.8 458.5,326.0 444.5,329.0 430.9,331.7 418.2,333.5 407.3,334.2 398.6,333.1 392.5,330.3 389.4,327.3 389.4,325.9 392.5,326.9 398.6,329.7 407.3,332.7 418.2,334.1 430.9,333.2 444.5,330.5 458.5,327.5 472.1,326.0 484.8,326.8 495.7,329.5 504.4,332.5 510.5,334.1 513.6,333.4 513.6,330.8 510.5,327.7 504.4,326.0 495.7,326.6 484.8,329.2 472.1,332.3 458.5,334.1 444.5,336.4 430.9,339.2 418.2,341.3 407.3,342.3 398.6,341.9 392.5,339.4 389.4,336.3 389.4,334.3 392.5,334.6 398.6,337.0 407.3,340.1 418.2,342.2 430.9,342.0 444.5,339.6 458.5,336.5 472.1,334.4 484.8,334.5 495.7,336.8 504.4,339.9 510.5,342.1 513.6,342.1 513.6,339.9 510.5,336.8 504.4,334.5 495.7,334.4 484.8,336.5 472.1,339.7 458.5,342.0 444.5,343.7 430.9,346.7 418.2,349.0 407.3,350.3 398.6,350.4 392.5,348.5 389.4,345.4 389.4,342.9 392.5,342.5 398.6,344.4 407.3,347.5 418.2,350.0 430.9,350.5 444.5,348.7 458.5,345.6 472.1,343.1 484.8,342.5 495.7,344.2 504.4,347.2 510.5,349.9 513.6,350.5 513.6,348.9 510.5,345.9 504.4,343.2 495.7,342.4 484.8,344.0 472.1,347.0 458.5,349.7 444.5,350.6 430.9,350.6 418.2,350.6 407.3,350.6 398.6,350.6 392.5,350.6 389.4,350.6" stroke="#00ff00" stroke-width="0.8"/>
<polyline points="389.4,309.8 392.5,312.0 398.6,315.1 407.3,317.4 418.2,317.5 430.9,315.3 444.5,312.2 458.5,309.9 472.1,309.7 484.8,311.8 495.7,314.9 504.4,317.2 510.5,317.5 513.6,315.6 513.6,312.5 510.5,310.0 504.4,309.6 495.7,311.5 484.8,314.6 472.1,317.1 458.5,318.6 444.5,321.6 430.9,324.1 418.2,325.6 407.3,325.9 398.6,324.2 392.5,321.1 389.4,318.5 389.4,317.8 392.5,319.4 398.6,322.4 407.3,325.1 418.2,325.9 430.9,324.4 444.5,321.4 458.5,318.6 472.1,317.7 484.8,319.2 495.7,322.2 504.4,324.9 510.5,325.9 513.6,324.6 513.6,321.6 510.5,318.8 504.4,317.7 495.7,319.0 484.8,321.9 472.1,324.8 458.5,326.0 444.5,329.0 430.9,331.7 418.2,333.5 407.3,334.2 398.6,333.1 392.5,330.3 389.4,327.3 389.4,325.9 392.5,326.9 398.6,329.7 407.3,332.7 418.2,334.1 430.9,333.2 444.5,330.5 458.5,327.5 472.1,326.0 484.8,326.8 495.7,329.5 504.4,332.5 510.5,334.1 513.6,333.4 513.6,330.8 510.5,327.7 504.4,326.0 495.7,326.6 484.8,329.2 472.1,332.3 458.5,334.1 444.5,336.4 430.9,339.2 418.2,341.3 407.3,342.3 398.6,341.9 392.5,339.4 389.4,336.3 389.4,334.3 392.5,334.6 398.6,337.0 407.3,340.1 418.2,342.2 430.9,342.0 444.5,339.6 458.5,336.5 472.1,334.4 484.8,334.5 495.7,336.8 504.4,339.9 510.5,342.1 513.6,342.1 513.6,339.9 510.5,336.8 504.4,334.5 495.7,334.4 484.8,336.5 472.1,339.7 458.5,342.0 444.5,343.7 430.9,346.7 418.2,349.0 407.3,350.3 398.6,350.4 392.5,348.5 389.4,345.4 389.4,342.9 392.5,342.5 398.6,344.4 407.3,347.5 418.2,350.0 430.9,350.5 444.5,348.7 458.5,345.6 472.1,343.1 484.8,342.5 495.7,344.2 504.4,347.2 510.5,349.9 513.6,350.5 513.6,348.9 510.5,345.9 504.4,343.2 495.7,342.4 484.8,344.0 472.1,347.0 458.5,349.7 444.5,350.6 430.9,350.6 418.2,350.6 407.3,350.6 398.6,350.6 392.5,350.6 389.4,350.6" stroke="#00ff00" stroke-width="0.8"/>
<polyline points="379.5,308.6 383.1,310.8 390.1,313.9 400.2,316.2 412.9,316.3 427.6,314.1 443.4,311.0 459.6,308.7 475.4,308.5 490.1,310.6 502.8,313.7 512.9,316.0 519.9,316.3 523.5,314.4 523.5,311.3 519.9,308.8 512.9,308.4 502.8,310.3 490.1,313.4 475.4,315.9 459.6,317.4 443.4,320.4 427.6,322.9 412.9,324.4 400.2,324.7 390.1,323.0 383.1,319.9 379.5,317.3 379.5,316.6 383.1,318.2 390.1,321.2 400.2,323.9 412.9,324.7 427.6,323.2 443.4,320.2 459.6,317.4 475.4,316.5 490.1,318.0 502.8,321.0 512.9,323.7 519.9,324.7 523.5,323.4 523.5,320.4 519.9,317.6 512.9,316.5 502.8,317.8 490.1,320.7 475.4,323.6 459.6,324.8 443.4,327.8 427.6,330.5 412.9,332.3 400.2,333.0 390.1,331.9 383.1,329.1 379.5,326.1 379.5,324.7 383.1,325.7 390.1,328.5 400.2,331.5 412.9,332.9 427.6,332.0 443.4,329.3 459.6,326.3 475.4,324.8 490.1,325.6 502.8,328.3 512.9,331.3 519.9,332.9 523.5,332.2 523.5,329.6 519.9,326.5 512.9,324.8 502.8,325.4 490.1,328.0 475.4,331.1 459.6,332.9 443.4,335.2 427.6,338.0 412.9,340.1 400.2,341.1 390.1,340.7 383.1,338.2 379.5,335.1 379.5,333.1 383.1,333.4 390.1,335.8 400.2,338.9 412.9,341.0 427.6,340.8 443.4,338.4 459.6,335.3 475.4,333.2 490.1,333.3 502.8,335.6 512.9,338.7 519.9,340.9 523.5,340.9 523.5,338.7 519.9,335.6 512.9,333.3 502.8,333.2 490.1,335.3 475.4,338.5 459.6,340.8 443.4,342.5 427.6,345.5 412.9,347.8 400.2,349.1 390.1,349.2 383.1,347.3 379.5,344.2 379.5,341.7 383.1,341.3 390.1,343.2 400.2,346.3 412.9,348.8 427.6,349.3 443.4,347.5 459.6,344.4 475.4,341.9 490.1,341.3 502.8,343.0 512.9,346.0 519.9,348.7 523.5,349.3 523.5,347.7 519.9,344.7 512.9,342.0 502.8,341.2 490.1,342.8 475.4,345.8 459.6,348.5 443.4,349.4 427.6,349.4 412.9,349.4 400.2,349.4 390.1,349.4 383.1,349.4 379.5,349.4" stroke="#00ffff" stroke-width="0.8"/>
<polyline points="379.5,308.6 383.1,310.8 390.1,313.9 400.2,316.2 412.9,316.3 427.6,314.1 443.4,311.0 459.6,308.7 475.4,308.5 490.1,310.6 502.8,313.7 512.9,316.0 519.9,316.3 523.5,314.4 523.5,311.3 519.9,308.8 512.9,308.4 502.8,310.3 490.1,313.4 475.4,315.9 459.6,317.4 443.4,320.4 427.6,322.9 412.9,324.4 400.2,324.7 390.1,323.0 383.1,319.9 379.5,317.3 379.5,316.6 383.1,318.2 390.1,321.2 400.2,323.9 412.9,324.7 427.6,323.2 443.4,320.2 459.6,317.4 475.4,316.5 490.1,318.0 502.8,321.0 512.9,323.7 519.9,324.7 523.5,323.4 523.5,320.4 519.9,317.6 512.9,316.5 502.8,317.8 490.1,320.7 475.4,323.6 459.6,324.8 443.4,327.8 427.6,330.5 412.9,332.3 400.2,333.0 390.1,331.9 383.1,329.1 379.5,326.1 379.5,324.7 383.1,325.7 390.1,328.5 400.2,331.5 412.9,332.9 427.6,332.0 443.4,329.3 459.6,326.3 475.4,324.8 490.1,325.6 502.8,328.3 512.9,331.3 519.9,332.9 523.5,332.2 523.5,329.6 519.9,326.5 512.9,324.8 502.8,325.4 490.1,328.0 475.4,331.1 459.6,332.9 443.4,335.2 427.6,338.0 412.9,340.1 400.2,341.1 390.1,340.7 383.1,338.2 379.5,335.1 379.5,333.1 383.1,333.4 390.1,335.8 400.2,338.9 412.9,341.0 427.6,340.8 443.4,338.4 459.6,335.3 475.4,333.2 490.1,333.3 502.8,335.6 512.9,338.7 519.9,340.9 523.5,340.9 523.5,338.7 519.9,335.6 512.9,333.3 502.8,333.2 490.1,335.3 475.4,338.5 459.6,340.8 443.4,342.5 427.6,345.5 412.9,347.8 400.2,349.1 390.1,349.2 383.1,347.3 379.5,344.2 379.5,341.7 383.1,341.3 390.1,343.2 400.2,346.3 412.9,348.8 427.6,349.3 443.4,347.5 459.6,344.4 475.4,341.9 490.1,341.3 502.8,343.0 512.9,346.0 519.9,348.7 523.5,349.3 523.5,347.7 519.9,344.7 512.9,342.0 502.8,341.2 490.1,342.8 475.4,345.8 459.6,348.5 443.4,349.4 427.6,349.4 412.9,349.4 400.2,349.4 390.1,349.4 383.1,349.4 379.5,349.4" stroke="#00ffff" stroke-width="0.8"/>
<polyline points="379.5,308.6 383.1,310.8 390.1,313.9 400.2,316.2 412.9,316.3 427.6,314.1 443.4,311.0 459.6,308.7 475.4,308.5 490.1,310.6 502.8,313.7 512.9,316.0 519.9,316.3 523.5,314.4 523.5,311.3 519.9,308.8 512.9,308.4 502.8,310.3 490.1,313.4 475.4,315.9 459.6,317.4 443.4,320.4 427.6,322.9 412.9,324.4 400.2,324.7 390.1,323.0 383.1,319.9 379.5,317.3 379.5,316.6 383.1,318.2 390.1,321.2 400.2,323.9 412.9,324.7 427.6,323.2 443.4,320.2 459.6,317.4 475.4,316.5 490.1,318.0 502.8,321.0 512.9,323.7 519.9,324.7 523.5,323.4 523.5,320.4 519.9,317.6 512.9,316.5 502.8,317.8 490.1,320.7 475.4,323.6 459.6,324.8 443.4,327.8 427.6,330.5 412.9,332.3 400.2,333.0 390.1,331.9 383.1,329.1 379.5,326.1 379.5,324.7 383.1,325.7 390.1,328.5 400.2,331.5 412.9,332.9 427.6,332.0 443.4,329.3 459.6,326.3 475.4,324.8 490.1,325.6 502.8,328.3 512.9,331.3 519.9,332.9 523.5,332.2 523.5,329.6 519.9,326.5 512.9,324.8 502.8,325.4 490.1,328.0 475.4,331.1 459.6,332.9 443.4,335.2 427.6,338.0 412.9,340.1 400.2,341.1 390.1,340.7 383.1,338.2 379.5,335.1 379.5,333.1 383.1,333.4 390.1,335.8 400.2,338.9 412.9,341.0 427.6,340.8 443.4,338.4 459.6,335.3 475.4,333.2 490.1,333.3 502.8,335.6 512.9,338.7 519.9,340.9 523.5,340.9 523.5,338.7 519.9,335.6 512.9,333.3 502.8,333.2 490.1,335.3 475.4,338.5 459.6,340.8 443.4,342.5 427.6,345.5 412.9,347.8 400.2,349.1 390.1,349.2 383.1,347.3 379.5,344.2 379.5,341.7 383.1,341.3 390.1,343.2 400.2,346.3 412.9,348.8 427.6,349.3 443.4,347.5 459.6,344.4 475.4,341.9 490.1,341.3 502.8,343.0 512.9,346.0 519.9,348.7 523.5,349.3 523.5,347.7 519.9,344.7 512.9,342.0 502.8,341.2 490.1,342.8 475.4,345.8 459.6,348.5 443.4,349.4 427.6,349.4 412.9,349.4 400.2,349.4 390.1,349.4 383.1,349.4 379.5,349.4" stroke="#00ffff" stroke-width="0.8"/>
<polyline points="389.4,308.6 392.5,310.8 398.6,313.9 407.3,316.2 418.2,316.3 430.9,314.1 444.5,311.0 458.5,308.7 472.1,308.5 484.8,310.6 495.7,313.7 504.4,316.0 510.5,316.3 513.6,314.4 513.6,311.3 510.5,308.8 504.4,308.4 495.7,310.3 484.8,313.4 472.1,315.9 458.5,317.4 444.5,320.4 430.9,322.9 418.2,324.4 407.3,324.7 398.6,323.0 392.5,319.9 389.4,317.3 389.4,316.6 392.5,318.2 398.6,321.2 407.3,323.9 418.2,324.7 430.9,323.2 444.5,320.2 458.5,317.4 472.1,316.5 484.8,318.0 495.7,321.0 504.4,323.7 510.5,324.7 513.6,323.4 513.6,320.4 510.5,317.6 504.4,316.5 495.7,317.8 484.8,320.7 472.1,323.6 458.5,324.8 444.5,327.8 430.9,330.5 418.2,332.3 407.3,333.0 398.6,331.9 392.5,329.1 389.4,326.1 389.4,324.7 392.5,325.7 398.6,328.5 407.3,331.5 418.2,332.9 430.9,332.0 444.5,329.3 458.5,326.3 472.1,324.8 484.8,325.6 495.7,328.3 504.4,331.3 510.5,332.9 513.6,332.2 513.6,329.6 510.5,326.5 504.4,324.8 495.7,325.4 484.8,328.0 472.1,331.1 458.5,332.9 444.5,335.2 430.9,338.0 418.2,340.1 407.3,341.1 398.6,340.7 392.5,338.2 389.4,335.1 389.4,333.1 392.5,333.4 398.6,335.8 407.3,338.9 418.2,341.0 430.9,340.8 444.5,338.4 458.5,335.3 472.1,333.2 484.8,333.3 495.7,335.6 504.4,338.7 510.5,340.9 513.6,340.9 513.6,338.7 510.5,335.6 504.4,333.3 495.7,333.2 484.8,335.3 472.1,338.5 458.5,340.8 444.5,342.5 430.9,345.5 418.2,347.8 407.3,349.1 398.6,349.2 392.5,347.3 389.4,344.2 389.4,341.7 392.5,341.3 398.6,343.2 407.3,346.3 418.2,348.8 430.9,349.3 444.5,347.5 458.5,344.4 472.1,341.9 484.8,341.3 495.7,343.0 504.4,346.0 510.5,348.7 513.6,349.3 513.6,347.7 510.5,344.7 504.4,342.0 495.7,341.2 484.8,342.8 472.1,345.8 458.5,348.5 444.5,349.4 430.9,349.4 418.2,349.4 407.3,349.4 398.6,349.4 392.5,349.4 389.4,349.4" stroke="#ff00ff" stroke-width="0.8"/>
<polyline points="389.4,308.6 392.5,310.8 398.6,313.9 407.3,316.2 418.2,316.3 430.9,314.1 444.5,311.0 458.5,308.7 472.1,308.5 484.8,310.6 495.7,313.7 504.4,316.0 510.5,316.3 513.6,314.4 513.6,311.3 510.5,308.8 504.4,308.4 495.7,310.3 484.8,313.4 472.1,315.9 458.5,317.4 444.5,320.4 430.9,322.9 418.2,324.4 407.3,324.7 398.6,323.0 392.5,319.9 389.4,317.3 389.4,316.6 392.5,318.2 398.6,321.2 407.3,323.9 418.2,324.7 430.9,323.2 444.5,320.2 458.5,317.4 472.1,316.5 484.8,318.0 495.7,321.0 504.4,323.7 510.5,324.7 513.6,323.4 513.6,320.4 510.5,317.6 504.4,316.5 495.7,317.8 484.8,320.7 472.1,323.6 458.5,324.8 444.5,327.8 430.9,330.5 418.2,332.3 407.3,333.0 398.6,331.9 392.5,329.1 389.4,326.1 389.4,324.7 392.5,325.7 398.6,328.5 407.3,331.5 418.2,332.9 430.9,332.0 444.5,329.3 458.5,326.3 472.1,324.8 484.8,325.6 495.7,328.3 504.4,331.3 510.5,332.9 513.6,332.2 513.6,329.6 510.5,326.5 504.4,324.8 495.7,325.4 484.8,328.0 472.1,331.1 458.5,332.9 444.5,335.2 430.9,338.0 418.2,340.1 407.3,341.1 398.6,340.7 392.5,338.2 389.4,335.1 389.4,333.1 392.5,333.4 398.6,335.8 407.3,338.9 418.2,341.0 430.9,340.8 444.5,338.4 458.5,335.3 472.1,333.2 484.8,333.3 495.7,335.6 504.4,338.7 510.5,340.9 513.6,340.9 513.6,338.7 510.5,335.6 504.4,333.3 495.7,333.2 484.8,335.3 472.1,338.5 458.5,340.8 444.5,342.5 430.9,345.5 418.2,347.8 407.3,349.1 398.6,349.2 392.5,347.3 389.4,344.2 389.4,341.7 392.5,341.3 398.6,343.2 407.3,346.3 418.2,348.8 430.9,349.3 444.5,347.5 458.5,344.4 472.1,341.9 484.8,341.3 495.7,343.0 504.4,346.0 510.5,348.7 513.6,349.3 513.6,347.7 510.5,344.7 504.4,342.0 495.7,341.2 484.8,342.8 472.1,345.8 458.5,348.5 444.5,349.4 430.9,349.4 418.2,349.4 407.3,349.4 398.6,349.4 392.5,349.4 389.4,349.4" stroke="#ff00ff" stroke-width="0.8"/>
<polyline points="389.4,308.6 392.5,310.8 398.6,313.9 407.3,316.2 418.2,316.3 430.9,314.1 444.5,311.0 458.5,308.7 472.1,308.5 484.8,310.6 495.7,313.7 504.4,316.0 510.5,316.3 513.6,314.4 513.6,311.3 510.5,308.8 504.4,308.4 495.7,310.3 484.8,313.4 472.1,315.9 458.5,317.4 444.5,320.4 430.9,322.9 418.2,324.4 407.3,324.7 398.6,323.0 392.5,319.9 389.4,317.3 389.4,316.6 392.5,318.2 398.6,321.2 407.3,323.9 418.2,324.7 430.9,323.2 444.5,320.2 458.5,317.4 472.1,316.5 484.8,318.0 495.7,321.0 504.4,323.7 510.5,324.7 513.6,323.4 513.6,320.4 510.5,317.6 504.4,316.5 495.7,317.8 484.8,320.7 472.1,323.6 458.5,324.8 444.5,327.8 430.9,330.5 418.2,332.3 407.3,333.0 398.6,331.9 392.5,329.1 389.4,326.1 389.4,324.7 392.5,325.7 398.6,328.5 407.3,331.5 418.2,332.9 430.9,332.0 444.5,329.3 458.5,326.3 472.1,324.8 484.8,325.6 495.7,328.3 504.4,331.3 510.5,332.9 513.6,332.2 513.6,329.6 510.5,326.5 504.4,324.8 495.7,325.4 484.8,328.0 472.1,331.1 458.5,332.9 444.5,335.2 430.9,338.0 418.2,340.1 407.3,341.1 398.6,340.7 392.5,338.2 389.4,335.1 389.4,333.1 392.5,333.4 398.6,335.8 407.3,338.9 418.2,341.0 430.9,340.8 444.5,338.4 458.5,335.3 472.1,333.2 484.8,333.3 495.7,335.6 504.4,338.7 510.5,340.9 513.6,340.9 513.6,338.7 510.5,335.6 504.4,333.3 495.7,333.2 484.8,335.3 472.1,338.5 458.5,340.8 444.5,342.5 430.9,345.5 418.2,347.8 407.3,349.1 398.6,349.2 392.5,347.3 389.4,344.2 389.4,341.7 392.5,341.3 398.6,343.2 407.3,346.3 418.2,348.8 430.9,349.3 444.5,347.5 458.5,344.4 472.1,341.9 484.8,341.3 495.7,343.0 504.4,346.0 510.5,348.7 513.6,349.3 513.6,347.7 510.5,344.7 504.4,342.0 495.7,341.2 484.8,342.8 472.1,345.8 458.5,348.5 444.5,349.4 430.9,349.4 418.2,349.4 407.3,349.4 398.6,349.4 392.5,349.4 389.4,349.4" stroke="#ff00ff" stroke-width="0.8"/>
<line x1="378" y1="307.5" x2="524" y2="307.5" stroke="#ff0000" stroke-width="1"/>
<line x1="388" y1="307.5" x2="514" y2="307.5" stroke="#00ff00" stroke-width="1"/>
<line x1="378" y1="306.5" x2="524" y2="306.5" stroke="#00ffff" stroke-width="1"/>
<line x1="388" y1="306.5" x2="514" y2="306.5" stroke="#ff00ff" stroke-width="1"/>
<line x1="378" y1="350.5" x2="524" y2="350.5" stroke="#00ffff" stroke-width="1"/>
<line x1="388" y1="350.5" x2="514" y2="350.5" stroke="#ff00ff" stroke-width="1"/>
<line x1="378" y1="351.5" x2="524" y2="351.5" stroke="#ff0000" stroke-width="1"/>
<line x1="388" y1="351.5" x2="514" y2="351.5" stroke="#00ff00" stroke-width="1"/>
</g>
<text x="391.5" y="367" font-size="14" fill="#ff00ff" textLength="62.9" lengthAdjust="spacingAndGlyphs">L2 = 9 mm</text>
<g id="tables" shape-rendering="crispEdges">
<line x1="563" y1="127.5" x2="678" y2="127.5" stroke="#ffff00" stroke-width="1"/>
<line x1="563" y1="146.5" x2="678" y2="146.5" stroke="#ffff00" stroke-width="1"/>
<line x1="563" y1="166.5" x2="678" y2="166.5" stroke="#ffff00" stroke-width="1"/>
<line x1="563" y1="185.5" x2="678" y2="185.5" stroke="#ffff00" stroke-width="1"/>
<line x1="563" y1="204.5" x2="678" y2="204.5" stroke="#ffff00" stroke-width="1"/>
<line x1="563" y1="224.5" x2="678" y2="224.5" stroke="#ffff00" stroke-width="1"/>
<line x1="563" y1="243.5" x2="678" y2="243.5" stroke="#ffff00" stroke-width="1"/>
<line x1="563" y1="263.5" x2="678" y2="263.5" stroke="#ffff00" stroke-width="1"/>
<line x1="563" y1="282.5" x2="678" y2="282.5" stroke="#ffff00" stroke-width="1"/>
<line x1="563" y1="302.5" x2="678" y2="302.5" stroke="#ffff00" stroke-width="1"/>
<line x1="563" y1="321.5" x2="678" y2="321.5" stroke="#ffff00" stroke-width="1"/>
<line x1="563" y1="341.5" x2="678" y2="341.5" stroke="#ffff00" stroke-width="1"/>
<line x1="563" y1="360.5" x2="678" y2="360.5" stroke="#ffff00" stroke-width="1"/>
<line x1="563" y1="379.5" x2="678" y2="379.5" stroke="#ffff00" stroke-width="1"/>
<line x1="563" y1="399.5" x2="678" y2="399.5" stroke="#ffff00" stroke-width="1"/>
<line x1="563.5" y1="127" x2="563.5" y2="400" stroke="#ffff00" stroke-width="1"/>
<line x1="677.5" y1="127" x2="677.5" y2="400" stroke="#ffff00" stroke-width="1"/>
<line x1="598.5" y1="146" x2="598.5" y2="400" stroke="#ffff00" stroke-width="1"/>
<line x1="624.5" y1="146" x2="624.5" y2="400" stroke="#ffff00" stroke-width="1"/>
<line x1="697" y1="127.5" x2="873" y2="127.5" stroke="#ffff00" stroke-width="1"/>
<line x1="697" y1="146.5" x2="873" y2="146.5" stroke="#ffff00" stroke-width="1"/>
<line x1="697" y1="166.5" x2="873" y2="166.5" stroke="#ffff00" stroke-width="1"/>
<line x1="697" y1="185.5" x2="873" y2="185.5" stroke="#ffff00" stroke-width="1"/>
<line x1="697" y1="204.5" x2="873" y2="204.5" stroke="#ffff00" stroke-width="1"/>
<line x1="697" y1="224.5" x2="873" y2="224.5" stroke="#ffff00" stroke-width="1"/>
<line x1="697" y1="243.5" x2="873" y2="243.5" stroke="#ffff00" stroke-width="1"/>
<line x1="697" y1="263.5" x2="873" y2="263.5" stroke="#ffff00" stroke-width="1"/>
<line x1="697" y1="282.5" x2="873" y2="282.5" stroke="#ffff00" stroke-width="1"/>
<line x1="697.5" y1="127" x2="697.5" y2="283" stroke="#ffff00" stroke-width="1"/>
<line x1="872.5" y1="127" x2="872.5" y2="283" stroke="#ffff00" stroke-width="1"/>
<line x1="697" y1="351.5" x2="970" y2="351.5" stroke="#ffff00" stroke-width="1"/>
<line x1="697" y1="370.5" x2="970" y2="370.5" stroke="#ffff00" stroke-width="1"/>
<line x1="697" y1="390.5" x2="970" y2="390.5" stroke="#ffff00" stroke-width="1"/>
<line x1="697.5" y1="351" x2="697.5" y2="391" stroke="#ffff00" stroke-width="1"/>
<line x1="969.5" y1="351" x2="969.5" y2="391" stroke="#ffff00" stroke-width="1"/>
<line x1="899" y1="127.5" x2="1189" y2="127.5" stroke="#ffff00" stroke-width="1"/>
<line x1="899" y1="146.5" x2="1189" y2="146.5" stroke="#ffff00" stroke-width="1"/>
<line x1="899" y1="166.5" x2="1189" y2="166.5" stroke="#ffff00" stroke-width="1"/>
<line x1="899" y1="185.5" x2="1189" y2="185.5" stroke="#ffff00" stroke-width="1"/>
<line x1="899" y1="204.5" x2="1189" y2="204.5" stroke="#ffff00" stroke-width="1"/>
<line x1="899" y1="224.5" x2="1189" y2="224.5" stroke="#ffff00" stroke-width="1"/>
<line x1="899" y1="243.5" x2="1189" y2="243.5" stroke="#ffff00" stroke-width="1"/>
<line x1="899.5" y1="127" x2="899.5" y2="244" stroke="#ffff00" stroke-width="1"/>
<line x1="1188.5" y1="127" x2="1188.5" y2="244" stroke="#ffff00" stroke-width="1"/>
<line x1="917.5" y1="146" x2="917.5" y2="244" stroke="#ffff00" stroke-width="1"/>
<line x1="969.5" y1="146" x2="969.5" y2="244" stroke="#ffff00" stroke-width="1"/>
<line x1="1030.5" y1="146" x2="1030.5" y2="244" stroke="#ffff00" stroke-width="1"/>
<line x1="1083.5" y1="146" x2="1083.5" y2="244" stroke="#ffff00" stroke-width="1"/>
<line x1="1135.5" y1="146" x2="1135.5" y2="244" stroke="#ffff00" stroke-width="1"/>
</g>
<text x="566.8" y="143" font-size="14" fill="#00ff00" textLength="44.1" lengthAdjust="spacingAndGlyphs">COTES</text>
<text x="566.8" y="162" font-size="14" fill="#00ff00" textLength="16.6" lengthAdjust="spacingAndGlyphs">De</text>
<text x="602.2" y="162" font-size="14" fill="#00ff00" textLength="21.9" lengthAdjust="spacingAndGlyphs">mm</text>
<text x="627.5" y="162" font-size="14" fill="#00ff00" textLength="14.2" lengthAdjust="spacingAndGlyphs">29</text>
<text x="566.8" y="182" font-size="14" fill="#00ff00" textLength="12.3" lengthAdjust="spacingAndGlyphs">Di</text>
<text x="602.2" y="182" font-size="14" fill="#00ff00" textLength="21.9" lengthAdjust="spacingAndGlyphs">mm</text>
<text x="627.5" y="182" font-size="14" fill="#00ff00" textLength="14.2" lengthAdjust="spacingAndGlyphs">25</text>
<text x="566.8" y="201" font-size="14" fill="#00ff00" textLength="20.2" lengthAdjust="spacingAndGlyphs">Dm</text>
<text x="602.2" y="201" font-size="14" fill="#00ff00" textLength="21.9" lengthAdjust="spacingAndGlyphs">mm</text>
<text x="627.5" y="201" font-size="14" fill="#00ff00" textLength="14.2" lengthAdjust="spacingAndGlyphs">27</text>
<text x="566.8" y="220" font-size="14" fill="#00ff00" textLength="14.5" lengthAdjust="spacingAndGlyphs">L0</text>
<text x="602.2" y="220" font-size="14" fill="#00ff00" textLength="21.9" lengthAdjust="spacingAndGlyphs">mm</text>
<text x="627.5" y="220" font-size="14" fill="#00ff00" textLength="14.2" lengthAdjust="spacingAndGlyphs">15</text>
<text x="566.8" y="240" font-size="14" fill="#00ff00" textLength="7.2" lengthAdjust="spacingAndGlyphs">b</text>
<text x="602.2" y="240" font-size="14" fill="#00ff00" textLength="21.9" lengthAdjust="spacingAndGlyphs">mm</text>
<text x="627.5" y="240" font-size="14" fill="#00ff00" textLength="7.1" lengthAdjust="spacingAndGlyphs">2</text>
<text x="566.8" y="259" font-size="14" fill="#00ff00" textLength="3.6" lengthAdjust="spacingAndGlyphs">t</text>
<text x="602.2" y="259" font-size="14" fill="#00ff00" textLength="21.9" lengthAdjust="spacingAndGlyphs">mm</text>
<text x="627.5" y="259" font-size="14" fill="#00ff00" textLength="24.9" lengthAdjust="spacingAndGlyphs">0,24</text>
<text x="566.8" y="279" font-size="14" fill="#00ff00" textLength="6.5" lengthAdjust="spacingAndGlyphs">z</text>
<text x="627.5" y="279" font-size="14" fill="#00ff00" textLength="17.8" lengthAdjust="spacingAndGlyphs">3,5</text>
<text x="566.8" y="298" font-size="14" fill="#00ff00" textLength="7.2" lengthAdjust="spacingAndGlyphs">n</text>
<text x="627.5" y="298" font-size="14" fill="#00ff00" textLength="7.1" lengthAdjust="spacingAndGlyphs">5</text>
<text x="566.8" y="318" font-size="14" fill="#00ff00" textLength="10.9" lengthAdjust="spacingAndGlyphs">nt</text>
<text x="627.5" y="318" font-size="14" fill="#00ff00" textLength="7.1" lengthAdjust="spacingAndGlyphs">7</text>
<text x="566.8" y="337" font-size="14" fill="#00ff00" textLength="23.2" lengthAdjust="spacingAndGlyphs">Dec</text>
<text x="602.2" y="337" font-size="14" fill="#00ff00" textLength="21.9" lengthAdjust="spacingAndGlyphs">mm</text>
<text x="627.5" y="337" font-size="14" fill="#00ff00" textLength="32.0" lengthAdjust="spacingAndGlyphs">29,88</text>
<text x="566.8" y="357" font-size="14" fill="#00ff00" textLength="24.0" lengthAdjust="spacingAndGlyphs">Lflat</text>
<text x="602.2" y="357" font-size="14" fill="#00ff00" textLength="21.9" lengthAdjust="spacingAndGlyphs">mm</text>
<text x="627.5" y="357" font-size="14" fill="#00ff00" textLength="32.0" lengthAdjust="spacingAndGlyphs">607,6</text>
<text x="566.8" y="376" font-size="14" fill="#00ff00" textLength="10.8" lengthAdjust="spacingAndGlyphs">m</text>
<text x="602.2" y="376" font-size="14" fill="#00ff00" textLength="7.2" lengthAdjust="spacingAndGlyphs">g</text>
<text x="627.5" y="376" font-size="14" fill="#00ff00" textLength="32.0" lengthAdjust="spacingAndGlyphs">2,304</text>
<text x="566.8" y="395" font-size="14" fill="#00ff00" textLength="15.9" lengthAdjust="spacingAndGlyphs">P0</text>
<text x="602.2" y="395" font-size="14" fill="#00ff00" textLength="21.9" lengthAdjust="spacingAndGlyphs">mm</text>
<text x="627.5" y="395" font-size="14" fill="#00ff00" textLength="32.0" lengthAdjust="spacingAndGlyphs">2,832</text>
<text x="700.6" y="143" font-size="14" fill="#00ff00" textLength="57.1" lengthAdjust="spacingAndGlyphs">MATIERE</text>
<text x="700.6" y="162" font-size="14" fill="#00ff00" textLength="128.2" lengthAdjust="spacingAndGlyphs">EN 10151-1.4310 C+T</text>
<text x="700.6" y="182" font-size="14" fill="#00ff00" textLength="104.8" lengthAdjust="spacingAndGlyphs">Band X10CrNi18-8</text>
<text x="700.6" y="201" font-size="14" fill="#00ff00" textLength="48.2" lengthAdjust="spacingAndGlyphs">AISI 301</text>
<text x="700.6" y="220" font-size="14" fill="#00ff00" textLength="106.1" lengthAdjust="spacingAndGlyphs">Federband Nirosta</text>
<text x="700.6" y="240" font-size="14" fill="#00ff00" textLength="98.1" lengthAdjust="spacingAndGlyphs">E = 195000 MPa</text>
<text x="700.6" y="259" font-size="14" fill="#00ff00" textLength="95.3" lengthAdjust="spacingAndGlyphs">Rm = 1856 MPa</text>
<text x="700.6" y="279" font-size="14" fill="#00ff00" textLength="123.1" lengthAdjust="spacingAndGlyphs">Sig.adm = 1392 MPa</text>
<text x="700.6" y="367" font-size="14" fill="#00ff00" textLength="134.6" lengthAdjust="spacingAndGlyphs">Averti.: sig.c &gt; sig.adm</text>
<text x="700.6" y="386" font-size="14" fill="#00ff00" textLength="116.3" lengthAdjust="spacingAndGlyphs">Averti.: sig.c &gt; Rm !</text>
<text x="697.4" y="307" font-size="14" fill="#00ff00" textLength="356.6" lengthAdjust="spacingAndGlyphs">méthode de calcul: R=(n*z*0.516-0.456)*E*b/n^2*z^3*(t/Dm)^3</text>
<text x="898.8" y="263" font-size="14" fill="#00ff00" textLength="96.6" lengthAdjust="spacingAndGlyphs">R = 4,028 N/mm</text>
<text x="903" y="143" font-size="14" fill="#00ff00" textLength="2.9" lengthAdjust="spacingAndGlyphs">i</text>
<text x="924.4" y="143" font-size="14" fill="#00ff00" textLength="40.8" lengthAdjust="spacingAndGlyphs">L [mm]</text>
<text x="976.6" y="143" font-size="14" fill="#00ff00" textLength="28.3" lengthAdjust="spacingAndGlyphs">F [N]</text>
<text x="1034" y="143" font-size="14" fill="#00ff00" textLength="40.4" lengthAdjust="spacingAndGlyphs">s [mm]</text>
<text x="1087" y="143" font-size="14" fill="#00ff00" textLength="46.1" lengthAdjust="spacingAndGlyphs">sigma b</text>
<text x="1139" y="143" font-size="14" fill="#00ff00" textLength="51.7" lengthAdjust="spacingAndGlyphs">sig.b/Rm</text>
<text x="903.2" y="162" font-size="14" fill="#00ff00" textLength="7.1" lengthAdjust="spacingAndGlyphs">0</text>
<text x="929.2" y="162" font-size="14" fill="#00ff00" textLength="32.0" lengthAdjust="spacingAndGlyphs">15,00</text>
<text x="903.2" y="182" font-size="14" fill="#00ff00" textLength="7.1" lengthAdjust="spacingAndGlyphs">1</text>
<text x="929.2" y="182" font-size="14" fill="#00ff00" textLength="32.0" lengthAdjust="spacingAndGlyphs">12,00</text>
<text x="985.2" y="182" font-size="14" fill="#00ff00" textLength="32.0" lengthAdjust="spacingAndGlyphs">12,08</text>
<text x="1046.3999999999999" y="182" font-size="14" fill="#00ff00" textLength="24.9" lengthAdjust="spacingAndGlyphs">3,00</text>
<text x="1098.8" y="182" font-size="14" fill="#00ff00" textLength="21.3" lengthAdjust="spacingAndGlyphs">544</text>
<text x="1147.2" y="182" font-size="14" fill="#00ff00" textLength="24.9" lengthAdjust="spacingAndGlyphs">0,29</text>
<text x="903.2" y="201" font-size="14" fill="#00ff00" textLength="7.1" lengthAdjust="spacingAndGlyphs">2</text>
<text x="932.8000000000001" y="201" font-size="14" fill="#00ff00" textLength="24.9" lengthAdjust="spacingAndGlyphs">9,00</text>
<text x="985.2" y="201" font-size="14" fill="#00ff00" textLength="32.0" lengthAdjust="spacingAndGlyphs">24,17</text>
<text x="1046.3999999999999" y="201" font-size="14" fill="#00ff00" textLength="24.9" lengthAdjust="spacingAndGlyphs">6,00</text>
<text x="1095.2" y="201" font-size="14" fill="#00ff00" textLength="28.5" lengthAdjust="spacingAndGlyphs">1087</text>
<text x="1147.2" y="201" font-size="14" fill="#00ff00" textLength="24.9" lengthAdjust="spacingAndGlyphs">0,59</text>
<text x="903.2" y="220" font-size="14" fill="#00ff00" textLength="7.2" lengthAdjust="spacingAndGlyphs">n</text>
<text x="932.8000000000001" y="220" font-size="14" fill="#00ff00" textLength="24.9" lengthAdjust="spacingAndGlyphs">7,32</text>
<text x="985.2" y="220" font-size="14" fill="#00ff00" textLength="32.0" lengthAdjust="spacingAndGlyphs">30,94</text>
<text x="1046.3999999999999" y="220" font-size="14" fill="#00ff00" textLength="24.9" lengthAdjust="spacingAndGlyphs">7,68</text>
<text x="1095.2" y="220" font-size="14" fill="#00ff00" textLength="28.5" lengthAdjust="spacingAndGlyphs">1392</text>
<text x="1147.2" y="220" font-size="14" fill="#00ff00" textLength="24.9" lengthAdjust="spacingAndGlyphs">0,75</text>
<text x="903.2" y="240" font-size="14" fill="#00ff00" textLength="6.5" lengthAdjust="spacingAndGlyphs">c</text>
<text x="932.8000000000001" y="240" font-size="14" fill="#00ff00" textLength="24.9" lengthAdjust="spacingAndGlyphs">2,04</text>
<text x="985.2" y="240" font-size="14" fill="#00ff00" textLength="32.0" lengthAdjust="spacingAndGlyphs">52,20</text>
<text x="1042.8" y="240" font-size="14" fill="#00ff00" textLength="32.0" lengthAdjust="spacingAndGlyphs">12,96</text>
<text x="1095.2" y="240" font-size="14" fill="#00ff00" textLength="28.5" lengthAdjust="spacingAndGlyphs">2348</text>
<text x="1147.2" y="240" font-size="14" fill="#00ff00" textLength="24.9" lengthAdjust="spacingAndGlyphs">1,27</text>
<g id="chart1" shape-rendering="crispEdges" fill="none">
<line x1="62" y1="842.5" x2="482" y2="842.5" stroke="#ffff00" stroke-width="1" stroke-dasharray="3 3" stroke-dashoffset="0"/>
<line x1="59" y1="842.5" x2="63" y2="842.5" stroke="#ffff00" stroke-width="1"/>
<line x1="62" y1="780.5" x2="482" y2="780.5" stroke="#ffff00" stroke-width="1" stroke-dasharray="3 3" stroke-dashoffset="0"/>
<line x1="59" y1="780.5" x2="63" y2="780.5" stroke="#ffff00" stroke-width="1"/>
<line x1="62" y1="717.5" x2="482" y2="717.5" stroke="#ffff00" stroke-width="1" stroke-dasharray="3 3" stroke-dashoffset="0"/>
<line x1="59" y1="717.5" x2="63" y2="717.5" stroke="#ffff00" stroke-width="1"/>
<line x1="62" y1="655.5" x2="482" y2="655.5" stroke="#ffff00" stroke-width="1" stroke-dasharray="3 3" stroke-dashoffset="0"/>
<line x1="59" y1="655.5" x2="63" y2="655.5" stroke="#ffff00" stroke-width="1"/>
<line x1="62" y1="593.5" x2="482" y2="593.5" stroke="#ffff00" stroke-width="1" stroke-dasharray="3 3" stroke-dashoffset="0"/>
<line x1="59" y1="593.5" x2="63" y2="593.5" stroke="#ffff00" stroke-width="1"/>
<line x1="62" y1="530.5" x2="482" y2="530.5" stroke="#ffff00" stroke-width="1" stroke-dasharray="3 3" stroke-dashoffset="0"/>
<line x1="59" y1="530.5" x2="63" y2="530.5" stroke="#ffff00" stroke-width="1"/>
<line x1="122.5" y1="530" x2="122.5" y2="905" stroke="#ffff00" stroke-width="1" stroke-dasharray="3 3" stroke-dashoffset="0"/>
<line x1="122.5" y1="904" x2="122.5" y2="908" stroke="#ffff00" stroke-width="1"/>
<line x1="181.5" y1="530" x2="181.5" y2="905" stroke="#ffff00" stroke-width="1" stroke-dasharray="3 3" stroke-dashoffset="0"/>
<line x1="181.5" y1="904" x2="181.5" y2="908" stroke="#ffff00" stroke-width="1"/>
<line x1="241.5" y1="530" x2="241.5" y2="905" stroke="#ffff00" stroke-width="1" stroke-dasharray="3 3" stroke-dashoffset="0"/>
<line x1="241.5" y1="904" x2="241.5" y2="908" stroke="#ffff00" stroke-width="1"/>
<line x1="301.5" y1="530" x2="301.5" y2="905" stroke="#ffff00" stroke-width="1" stroke-dasharray="3 3" stroke-dashoffset="0"/>
<line x1="301.5" y1="904" x2="301.5" y2="908" stroke="#ffff00" stroke-width="1"/>
<line x1="361.5" y1="530" x2="361.5" y2="905" stroke="#ffff00" stroke-width="1" stroke-dasharray="3 3" stroke-dashoffset="0"/>
<line x1="361.5" y1="904" x2="361.5" y2="908" stroke="#ffff00" stroke-width="1"/>
<line x1="421.5" y1="530" x2="421.5" y2="905" stroke="#ffff00" stroke-width="1" stroke-dasharray="3 3" stroke-dashoffset="0"/>
<line x1="421.5" y1="904" x2="421.5" y2="908" stroke="#ffff00" stroke-width="1"/>
<line x1="481.5" y1="530" x2="481.5" y2="905" stroke="#ffff00" stroke-width="1" stroke-dasharray="3 3" stroke-dashoffset="0"/>
<line x1="481.5" y1="904" x2="481.5" y2="908" stroke="#ffff00" stroke-width="1"/>
<line x1="62.5" y1="512" x2="62.5" y2="908" stroke="#ffff00" stroke-width="1"/>
<line x1="59" y1="904.5" x2="502" y2="904.5" stroke="#ffff00" stroke-width="1"/>
<rect x="61" y="516" width="3" height="8" fill="#ffff00"/>
<rect x="60" y="524" width="1" height="4" fill="#ffff00"/>
<rect x="64" y="524" width="1" height="4" fill="#ffff00"/>
<rect x="489" y="903" width="8" height="3" fill="#ffff00"/>
<rect x="485" y="902" width="4" height="1" fill="#ffff00"/>
<rect x="485" y="906" width="4" height="1" fill="#ffff00"/>
<line x1="449.5" y1="905" x2="449.5" y2="579" stroke="#ff0000" stroke-dasharray="18 6"/>
<line x1="450" y1="579.5" x2="63" y2="579.5" stroke="#ff0000" stroke-dasharray="18 6"/>
<line x1="292.5" y1="905" x2="292.5" y2="711" stroke="#ff0000" stroke-dasharray="18 6"/>
<line x1="293" y1="711.5" x2="63" y2="711.5" stroke="#ff0000" stroke-dasharray="18 6"/>
<line x1="241.5" y1="905" x2="241.5" y2="754" stroke="#00ffff" stroke-dasharray="18 6"/>
<line x1="242" y1="754.5" x2="63" y2="754.5" stroke="#00ffff" stroke-dasharray="18 6"/>
<line x1="152.5" y1="905" x2="152.5" y2="829" stroke="#00ff00" stroke-dasharray="18 6"/>
<line x1="153" y1="829.5" x2="63" y2="829.5" stroke="#00ff00" stroke-dasharray="18 6"/>
<line x1="62.5" y1="904.5" x2="450" y2="579.5" stroke="#ff0000" stroke-width="3"/>
</g>
<text x="62.5" y="509" font-size="16" fill="#00ff00" letter-spacing="-0.09">courbe de raideur du ressort</text>
<text x="20.3" y="504" font-size="9.9" fill="#ffff00" textLength="18.8" lengthAdjust="spacingAndGlyphs">F[N]</text>
<text x="19.7" y="908" font-size="9.9" fill="#ffff00" textLength="5.2" lengthAdjust="spacingAndGlyphs">0</text>
<text x="19.7" y="846" font-size="9.9" fill="#ffff00" textLength="10.4" lengthAdjust="spacingAndGlyphs">10</text>
<text x="19.7" y="784" font-size="9.9" fill="#ffff00" textLength="10.4" lengthAdjust="spacingAndGlyphs">20</text>
<text x="19.7" y="721" font-size="9.9" fill="#ffff00" textLength="10.4" lengthAdjust="spacingAndGlyphs">30</text>
<text x="19.7" y="659" font-size="9.9" fill="#ffff00" textLength="10.4" lengthAdjust="spacingAndGlyphs">40</text>
<text x="19.7" y="597" font-size="9.9" fill="#ffff00" textLength="10.4" lengthAdjust="spacingAndGlyphs">50</text>
<text x="19.7" y="534" font-size="9.9" fill="#ffff00" textLength="10.4" lengthAdjust="spacingAndGlyphs">60</text>
<text x="58.1" y="923" font-size="9.9" fill="#ffff00" textLength="5.2" lengthAdjust="spacingAndGlyphs">0</text>
<text x="118.1" y="923" font-size="9.9" fill="#ffff00" textLength="5.2" lengthAdjust="spacingAndGlyphs">2</text>
<text x="177.1" y="923" font-size="9.9" fill="#ffff00" textLength="5.2" lengthAdjust="spacingAndGlyphs">4</text>
<text x="237.1" y="923" font-size="9.9" fill="#ffff00" textLength="5.2" lengthAdjust="spacingAndGlyphs">6</text>
<text x="297.1" y="923" font-size="9.9" fill="#ffff00" textLength="5.2" lengthAdjust="spacingAndGlyphs">8</text>
<text x="352.7" y="923" font-size="9.9" fill="#ffff00" textLength="10.4" lengthAdjust="spacingAndGlyphs">10</text>
<text x="412.7" y="923" font-size="9.9" fill="#ffff00" textLength="10.4" lengthAdjust="spacingAndGlyphs">12</text>
<text x="472.7" y="923" font-size="9.9" fill="#ffff00" textLength="10.4" lengthAdjust="spacingAndGlyphs">14</text>
<text x="509.5" y="923" font-size="9.9" fill="#ffff00" textLength="26" lengthAdjust="spacingAndGlyphs">s[mm]</text>
<text x="209.5" y="576" font-size="9.8" fill="#ff0000" textLength="68.3" lengthAdjust="spacingAndGlyphs">Fc = 52,20 N</text>
<text x="130.4" y="708" font-size="9.8" fill="#ff0000" textLength="69.3" lengthAdjust="spacingAndGlyphs">Fn = 30,94 N</text>
<text x="104" y="750" font-size="9.8" fill="#00ffff" textLength="69.3" lengthAdjust="spacingAndGlyphs">F2 = 24,17 N</text>
<text x="60.4" y="826" font-size="9.8" fill="#00ff00" textLength="68.8" lengthAdjust="spacingAndGlyphs">F1 = 12,08 N</text>
<g id="chart2" shape-rendering="crispEdges" fill="none">
<line x1="588" y1="867.5" x2="982" y2="867.5" stroke="#ffff00" stroke-width="1"/>
<line x1="588" y1="823.5" x2="982" y2="823.5" stroke="#ffff00" stroke-width="1"/>
<line x1="588" y1="779.5" x2="982" y2="779.5" stroke="#ffff00" stroke-width="1"/>
<line x1="588" y1="736.5" x2="982" y2="736.5" stroke="#ffff00" stroke-width="1"/>
<line x1="588" y1="692.5" x2="982" y2="692.5" stroke="#ffff00" stroke-width="1"/>
<line x1="588" y1="648.5" x2="982" y2="648.5" stroke="#ffff00" stroke-width="1"/>
<line x1="588" y1="605.5" x2="982" y2="605.5" stroke="#ffff00" stroke-width="1"/>
<line x1="588" y1="561.5" x2="982" y2="561.5" stroke="#ffff00" stroke-width="1"/>
<line x1="588" y1="517.5" x2="982" y2="517.5" stroke="#ffff00" stroke-width="1"/>
<line x1="590.5" y1="517" x2="590.5" y2="870" stroke="#ffff00" stroke-width="1"/>
<line x1="639.5" y1="517" x2="639.5" y2="870" stroke="#ffff00" stroke-width="1"/>
<line x1="688.5" y1="517" x2="688.5" y2="870" stroke="#ffff00" stroke-width="1"/>
<line x1="737.5" y1="517" x2="737.5" y2="870" stroke="#ffff00" stroke-width="1"/>
<line x1="786.5" y1="517" x2="786.5" y2="870" stroke="#ffff00" stroke-width="1"/>
<line x1="834.5" y1="517" x2="834.5" y2="870" stroke="#ffff00" stroke-width="1"/>
<line x1="883.5" y1="517" x2="883.5" y2="870" stroke="#ffff00" stroke-width="1"/>
<line x1="932.5" y1="517" x2="932.5" y2="870" stroke="#ffff00" stroke-width="1"/>
<line x1="981.5" y1="517" x2="981.5" y2="870" stroke="#ffff00" stroke-width="1"/>
<line x1="590.5" y1="500" x2="590.5" y2="870" stroke="#ffff00" stroke-width="1"/>
<line x1="588" y1="867.5" x2="1002" y2="867.5" stroke="#ffff00" stroke-width="1"/>
<rect x="589" y="507" width="2" height="8" fill="#ffff00"/>
<rect x="590" y="504" width="2" height="7" fill="#ffff00"/>
<rect x="592" y="511" width="1" height="4" fill="#ffff00"/>
<rect x="989" y="866" width="8" height="3" fill="#ffff00"/>
<rect x="985" y="865" width="4" height="1" fill="#ffff00"/>
<rect x="985" y="869" width="4" height="1" fill="#ffff00"/>
<line x1="590.5" y1="867" x2="981.5" y2="517" stroke="#ffff00" stroke-width="0.8"/>
<line x1="590.5" y1="867" x2="981.5" y2="517" stroke="#ffff00" stroke-width="0.8"/>
<line x1="590.5" y1="867" x2="981.5" y2="517" stroke="#ffff00" stroke-width="0.8"/>
<line x1="590.5" y1="600.2" x2="654.5" y2="563.2" stroke="#ff0000" stroke-width="0.8"/>
<line x1="590.5" y1="600.2" x2="654.5" y2="563.2" stroke="#ff0000" stroke-width="0.8"/>
<line x1="590.5" y1="600.2" x2="654.5" y2="563.2" stroke="#ff0000" stroke-width="0.8"/>
<line x1="654" y1="563.5" x2="730" y2="563.5" stroke="#ff0000" stroke-width="1"/>
<line x1="590.5" y1="644.2" x2="729.5" y2="563.2" stroke="#ff00ff" stroke-width="0.8"/>
<line x1="590.5" y1="644.2" x2="729.5" y2="563.2" stroke="#ff00ff" stroke-width="0.8"/>
<line x1="590.5" y1="644.2" x2="729.5" y2="563.2" stroke="#ff00ff" stroke-width="0.8"/>
<line x1="729" y1="563.5" x2="805" y2="563.5" stroke="#ff00ff" stroke-width="1"/>
<line x1="590.5" y1="689.2" x2="804.5" y2="563.2" stroke="#00ff00" stroke-width="0.8"/>
<line x1="590.5" y1="689.2" x2="804.5" y2="563.2" stroke="#00ff00" stroke-width="0.8"/>
<line x1="590.5" y1="689.2" x2="804.5" y2="563.2" stroke="#00ff00" stroke-width="0.8"/>
<line x1="804" y1="563.5" x2="932" y2="563.5" stroke="#00ff00" stroke-width="1"/>
<rect x="722" y="629" width="3" height="121" fill="#ff0000"/>
<rect x="723" y="628" width="1" height="1" fill="#ff0000"/>
<rect x="723" y="750" width="1" height="1" fill="#ff0000"/>
<rect x="722" y="626" width="1" height="1" fill="#00ff00"/>
<rect x="723" y="626" width="1" height="1" fill="#00ff00"/>
<rect x="721" y="627" width="1" height="1" fill="#00ff00"/>
<rect x="724" y="627" width="1" height="1" fill="#00ff00"/>
<rect x="720" y="628" width="1" height="1" fill="#00ff00"/>
<rect x="725" y="628" width="1" height="1" fill="#00ff00"/>
<rect x="720" y="629" width="1" height="1" fill="#00ff00"/>
<rect x="725" y="629" width="1" height="1" fill="#00ff00"/>
<rect x="720" y="630" width="1" height="1" fill="#00ff00"/>
<rect x="725" y="630" width="1" height="1" fill="#00ff00"/>
<rect x="721" y="631" width="1" height="1" fill="#00ff00"/>
<rect x="724" y="631" width="1" height="1" fill="#00ff00"/>
<rect x="722" y="632" width="1" height="1" fill="#00ff00"/>
<rect x="723" y="632" width="1" height="1" fill="#00ff00"/>
<rect x="722" y="745" width="1" height="1" fill="#00ff00"/>
<rect x="723" y="745" width="1" height="1" fill="#00ff00"/>
<rect x="721" y="746" width="1" height="1" fill="#00ff00"/>
<rect x="724" y="746" width="1" height="1" fill="#00ff00"/>
<rect x="720" y="747" width="1" height="1" fill="#00ff00"/>
<rect x="725" y="747" width="1" height="1" fill="#00ff00"/>
<rect x="720" y="748" width="1" height="1" fill="#00ff00"/>
<rect x="725" y="748" width="1" height="1" fill="#00ff00"/>
<rect x="720" y="749" width="1" height="1" fill="#00ff00"/>
<rect x="725" y="749" width="1" height="1" fill="#00ff00"/>
<rect x="721" y="750" width="1" height="1" fill="#00ff00"/>
<rect x="724" y="750" width="1" height="1" fill="#00ff00"/>
<rect x="722" y="751" width="1" height="1" fill="#00ff00"/>
<rect x="723" y="751" width="1" height="1" fill="#00ff00"/>
</g>
<text x="634.3" y="507" font-size="16" fill="#00ff00" letter-spacing="-0.1">diagramme de Goodman</text>
<text x="551.3" y="492" font-size="8.5" fill="#ffff00" textLength="32.5" lengthAdjust="spacingAndGlyphs">sigma o</text>
<text x="551" y="870" font-size="8.5" fill="#ffff00" textLength="5.0" lengthAdjust="spacingAndGlyphs">0</text>
<text x="551" y="826" font-size="8.5" fill="#ffff00" textLength="15.0" lengthAdjust="spacingAndGlyphs">200</text>
<text x="551" y="782" font-size="8.5" fill="#ffff00" textLength="15.0" lengthAdjust="spacingAndGlyphs">400</text>
<text x="551" y="739" font-size="8.5" fill="#ffff00" textLength="15.0" lengthAdjust="spacingAndGlyphs">600</text>
<text x="551" y="695" font-size="8.5" fill="#ffff00" textLength="15.0" lengthAdjust="spacingAndGlyphs">800</text>
<text x="551" y="651" font-size="8.5" fill="#ffff00" textLength="20.0" lengthAdjust="spacingAndGlyphs">1000</text>
<text x="551" y="608" font-size="8.5" fill="#ffff00" textLength="20.0" lengthAdjust="spacingAndGlyphs">1200</text>
<text x="551" y="564" font-size="8.5" fill="#ffff00" textLength="20.0" lengthAdjust="spacingAndGlyphs">1400</text>
<text x="551" y="520" font-size="8.5" fill="#ffff00" textLength="20.0" lengthAdjust="spacingAndGlyphs">1600</text>
<text x="586.5999999999999" y="884" font-size="8.5" fill="#ffff00" textLength="5.0" lengthAdjust="spacingAndGlyphs">0</text>
<text x="628.1999999999999" y="884" font-size="8.5" fill="#ffff00" textLength="15.0" lengthAdjust="spacingAndGlyphs">200</text>
<text x="677.1999999999999" y="884" font-size="8.5" fill="#ffff00" textLength="15.0" lengthAdjust="spacingAndGlyphs">400</text>
<text x="726.1999999999999" y="884" font-size="8.5" fill="#ffff00" textLength="15.0" lengthAdjust="spacingAndGlyphs">600</text>
<text x="775.1999999999999" y="884" font-size="8.5" fill="#ffff00" textLength="15.0" lengthAdjust="spacingAndGlyphs">800</text>
<text x="819.5" y="884" font-size="8.5" fill="#ffff00" textLength="20.0" lengthAdjust="spacingAndGlyphs">1000</text>
<text x="868.5" y="884" font-size="8.5" fill="#ffff00" textLength="20.0" lengthAdjust="spacingAndGlyphs">1200</text>
<text x="917.5" y="884" font-size="8.5" fill="#ffff00" textLength="20.0" lengthAdjust="spacingAndGlyphs">1400</text>
<text x="966.5" y="884" font-size="8.5" fill="#ffff00" textLength="20.0" lengthAdjust="spacingAndGlyphs">1600</text>
<text x="1004.5" y="884" font-size="8.5" fill="#ffff00" textLength="60.5" lengthAdjust="spacingAndGlyphs">sigma u [MPa]</text>
<text x="653.3" y="558" font-size="9.8" fill="#ff0000" textLength="40.6" lengthAdjust="spacingAndGlyphs">100000</text>
<text x="733.5" y="558" font-size="9.8" fill="#ff00ff" textLength="29.5" lengthAdjust="spacingAndGlyphs">1Mio.</text>
<text x="816.2" y="558" font-size="9.8" fill="#00ff00" textLength="72" lengthAdjust="spacingAndGlyphs">10 mill.cycles</text>
<text x="716.5" y="623" font-size="9.8" fill="#00ff00" textLength="32.5" lengthAdjust="spacingAndGlyphs">sigma</text>
<text x="1024" y="539" font-size="14" fill="#00ffff" textLength="107.6" lengthAdjust="spacing">E = 195000 MPa</text>
<text x="1024" y="555" font-size="14" fill="#00ffff" textLength="103.5" lengthAdjust="spacing">Rm = 1856 MPa</text>
<text x="1024" y="572" font-size="14" fill="#00ffff" textLength="106.5" lengthAdjust="spacing">sig.z / Rm = 0,75</text>
<text x="1024" y="588" font-size="14" fill="#00ffff" textLength="110.4" lengthAdjust="spacing">sig.z = 1392 MPa</text>
<text x="1024" y="605" font-size="14" fill="#00ffff" textLength="118.4" lengthAdjust="spacing">sig.oz = 1393 MPa</text>
<text x="1024" y="621" font-size="14" fill="#00ffff" xml:space="preserve" textLength="110.4" lengthAdjust="spacing">sig.hz=  630 MPa</text>
<text x="1024" y="654" font-size="14" fill="#00ffff" xml:space="preserve" textLength="123.6" lengthAdjust="spacing">sigma1 =  544 MPa</text>
<text x="1024" y="670" font-size="14" fill="#00ffff" textLength="127.2" lengthAdjust="spacing">sigma2 = 1087 MPa</text>
<text x="1024" y="703" font-size="14" fill="#00ffff" xml:space="preserve" textLength="78.6" lengthAdjust="spacing">t  = 0,24 mm</text>
<text x="1024" y="736" font-size="14" fill="#00ffff" textLength="109.5" lengthAdjust="spacing">N &gt; 10 mill.cycles</text>
<text x="551" y="918.7" font-size="14" fill="#00ffff" textLength="409.5" lengthAdjust="spacing">diagramme de résistance à la fatique (Diagramme de Goodman)</text>
<text x="551" y="932.7" font-size="14" fill="#00ffff" textLength="299.3" lengthAdjust="spacing">EN 10151-1.4310 C+T (AISI 301) non grenaillé</text>
</svg></body></html>
